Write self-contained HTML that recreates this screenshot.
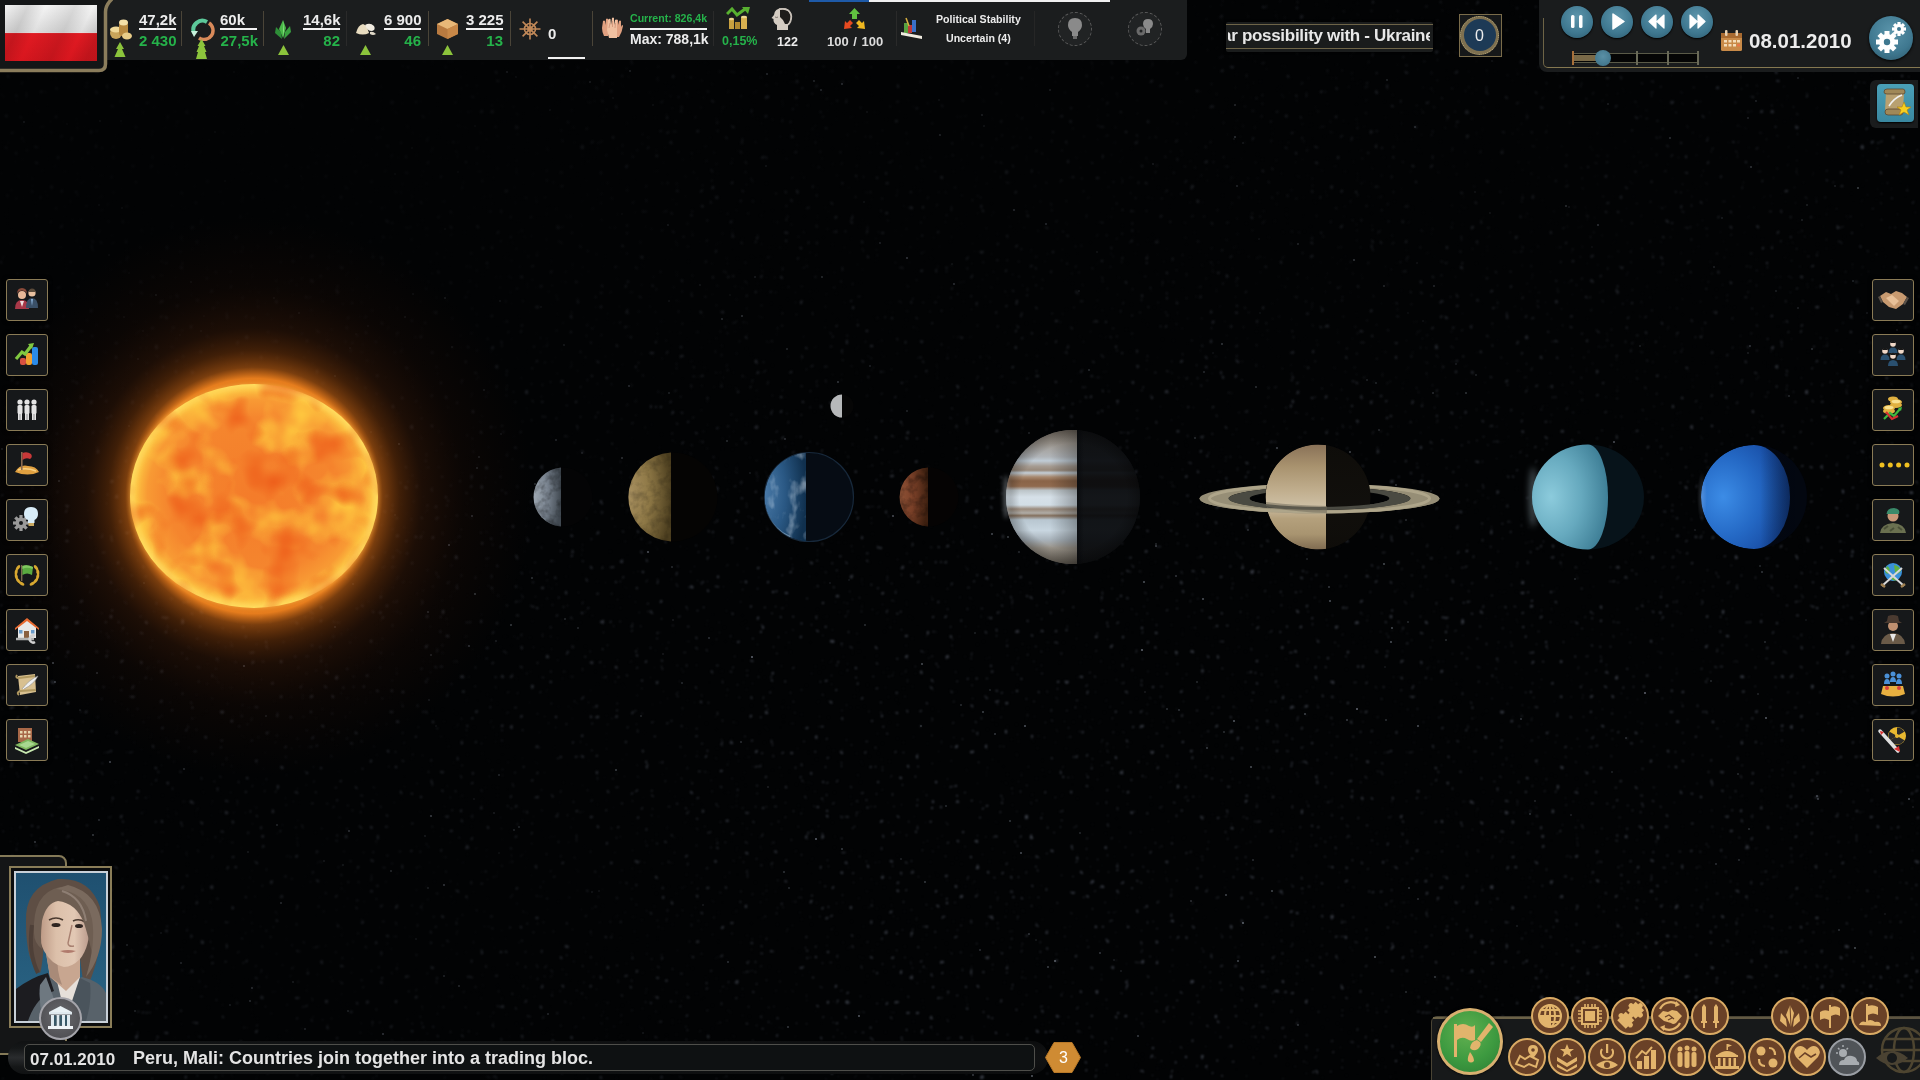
<!DOCTYPE html>
<html><head><meta charset="utf-8">
<style>
*{margin:0;padding:0;box-sizing:border-box}
html,body{width:1920px;height:1080px;overflow:hidden;background:#020304}
body{position:relative;font-family:"Liberation Sans",sans-serif;color:#e6e6e6}
.abs{position:absolute}
.stars{position:absolute;left:0;top:0}
.bar{position:absolute;left:0;top:0;width:1187px;height:60px;background:#1b1d1e;border-bottom-right-radius:6px}
.t{position:absolute;font-weight:bold;white-space:nowrap;line-height:1;will-change:transform}
.w{color:#ececec}
.g{color:#25b24a}
.ul{position:absolute;height:2px;background:#f2f2f2}
.sep{position:absolute;width:1px;background:#4a4438}
.btn{position:absolute;width:42px;height:42px;border:1.5px solid #8a7b56;border-radius:3px;background:#16181a;box-shadow:0 0 4px #000}
.btn svg{position:absolute;left:0;top:0}
.circ{position:absolute;width:38px;height:38px;border-radius:50%;background:#6a4127;border:2.5px solid #d9aa64}
.circ svg{position:absolute;left:0;top:0}
</style></head><body>
<svg class="stars" width="1920" height="1080" viewBox="0 0 1920 1080">
<defs>
<filter id="st" x="0" y="0" width="1920" height="1080" filterUnits="userSpaceOnUse" color-interpolation-filters="sRGB">
 <feTurbulence type="fractalNoise" baseFrequency="0.2" numOctaves="2" seed="4" result="n"/>
 <feColorMatrix in="n" type="matrix" values="0 0 0 0 0.7  0 0 0 0 0.74  0 0 0 0 0.85  15 0 0 0 -10.8" result="s"/>
 <feGaussianBlur in="s" stdDeviation="0.8" result="sb"/>
 <feTurbulence type="fractalNoise" baseFrequency="0.004" numOctaves="2" seed="8" result="m"/>
 <feColorMatrix in="m" type="matrix" values="0 0 0 0 0  0 0 0 0 0  0 0 0 0 0  2.5 0 0 0 -0.7" result="mm"/>
 <feComposite in="sb" in2="mm" operator="arithmetic" k1="0.5" k2="0.3" k3="0" k4="0"/>
</filter>
<radialGradient id="darkTL" cx="250" cy="120" r="650" gradientUnits="userSpaceOnUse"><stop offset="0" stop-color="#020304" stop-opacity=".95"/><stop offset=".5" stop-color="#020304" stop-opacity=".7"/><stop offset="1" stop-color="#020304" stop-opacity="0"/></radialGradient>
<radialGradient id="darkBL" cx="350" cy="950" r="500" gradientUnits="userSpaceOnUse"><stop offset="0" stop-color="#020304" stop-opacity=".6"/><stop offset="1" stop-color="#020304" stop-opacity="0"/></radialGradient>
<radialGradient id="darkTop" cx="1000" cy="100" r="550" gradientUnits="userSpaceOnUse"><stop offset="0" stop-color="#020304" stop-opacity=".75"/><stop offset="1" stop-color="#020304" stop-opacity="0"/></radialGradient>
<radialGradient id="darkTR" cx="1550" cy="160" r="450" gradientUnits="userSpaceOnUse"><stop offset="0" stop-color="#020304" stop-opacity=".65"/><stop offset="1" stop-color="#020304" stop-opacity="0"/></radialGradient>
</defs>
<rect width="1920" height="1080" filter="url(#st)"/>
<g fill="#c0cadc"><circle cx="622" cy="214" r="0.7" opacity="0.22"/><circle cx="1029" cy="433" r="0.7" opacity="0.47"/><circle cx="412" cy="148" r="1.0" opacity="0.22"/><circle cx="174" cy="493" r="1.1" opacity="0.24"/><circle cx="429" cy="700" r="0.7" opacity="0.37"/><circle cx="762" cy="1056" r="0.7" opacity="0.37"/><circle cx="256" cy="488" r="1.1" opacity="0.24"/><circle cx="592" cy="892" r="0.8" opacity="0.23"/><circle cx="1097" cy="252" r="0.7" opacity="0.36"/><circle cx="121" cy="121" r="0.8" opacity="0.35"/><circle cx="1021" cy="853" r="1.0" opacity="0.38"/><circle cx="870" cy="366" r="0.8" opacity="0.41"/><circle cx="469" cy="646" r="1.1" opacity="0.35"/><circle cx="659" cy="518" r="1.1" opacity="0.49"/><circle cx="227" cy="486" r="0.9" opacity="0.25"/><circle cx="939" cy="100" r="0.7" opacity="0.43"/><circle cx="1100" cy="953" r="0.9" opacity="0.30"/><circle cx="672" cy="567" r="1.0" opacity="0.22"/><circle cx="180" cy="335" r="0.7" opacity="0.22"/><circle cx="1347" cy="720" r="1.0" opacity="0.29"/><circle cx="741" cy="742" r="0.7" opacity="0.48"/><circle cx="682" cy="683" r="1.0" opacity="0.22"/><circle cx="1475" cy="192" r="0.8" opacity="0.32"/><circle cx="1760" cy="566" r="0.8" opacity="0.33"/><circle cx="1055" cy="961" r="1.0" opacity="0.46"/><circle cx="535" cy="484" r="0.9" opacity="0.40"/><circle cx="730" cy="295" r="0.7" opacity="0.25"/><circle cx="445" cy="298" r="1.0" opacity="0.45"/><circle cx="350" cy="348" r="0.8" opacity="0.33"/><circle cx="709" cy="638" r="0.8" opacity="0.41"/><circle cx="990" cy="690" r="0.7" opacity="0.34"/><circle cx="1672" cy="1031" r="1.1" opacity="0.32"/><circle cx="766" cy="166" r="1.0" opacity="0.22"/><circle cx="129" cy="273" r="0.8" opacity="0.23"/><circle cx="1153" cy="164" r="1.1" opacity="0.25"/><circle cx="195" cy="431" r="0.7" opacity="0.22"/><circle cx="399" cy="444" r="0.9" opacity="0.49"/><circle cx="1156" cy="544" r="0.7" opacity="0.45"/><circle cx="1907" cy="535" r="1.0" opacity="0.29"/><circle cx="277" cy="825" r="0.9" opacity="0.34"/><circle cx="1329" cy="587" r="0.8" opacity="0.49"/><circle cx="1014" cy="210" r="1.1" opacity="0.47"/><circle cx="1456" cy="364" r="0.7" opacity="0.41"/><circle cx="501" cy="434" r="0.8" opacity="0.31"/><circle cx="428" cy="612" r="1.1" opacity="0.30"/><circle cx="428" cy="888" r="0.8" opacity="0.44"/><circle cx="1571" cy="815" r="0.8" opacity="0.26"/><circle cx="946" cy="806" r="0.7" opacity="0.44"/><circle cx="907" cy="258" r="1.1" opacity="0.49"/><circle cx="859" cy="1016" r="0.9" opacity="0.49"/><circle cx="700" cy="285" r="0.8" opacity="0.34"/><circle cx="648" cy="552" r="1.1" opacity="0.45"/><circle cx="921" cy="726" r="0.7" opacity="0.45"/><circle cx="230" cy="456" r="0.8" opacity="0.34"/><circle cx="343" cy="865" r="0.9" opacity="0.23"/><circle cx="1817" cy="796" r="1.0" opacity="0.32"/><circle cx="1818" cy="799" r="0.8" opacity="0.50"/><circle cx="53" cy="663" r="1.0" opacity="0.44"/><circle cx="281" cy="903" r="1.0" opacity="0.40"/><circle cx="673" cy="620" r="0.8" opacity="0.21"/><circle cx="1535" cy="801" r="0.7" opacity="0.36"/><circle cx="1793" cy="502" r="0.8" opacity="0.45"/><circle cx="405" cy="317" r="0.9" opacity="0.35"/><circle cx="1466" cy="393" r="1.1" opacity="0.33"/><circle cx="252" cy="988" r="0.9" opacity="0.47"/><circle cx="1272" cy="891" r="1.1" opacity="0.33"/><circle cx="1762" cy="572" r="1.1" opacity="0.25"/><circle cx="980" cy="950" r="0.8" opacity="0.38"/><circle cx="1490" cy="213" r="0.8" opacity="0.34"/><circle cx="1392" cy="628" r="0.9" opacity="0.40"/><circle cx="1019" cy="552" r="0.7" opacity="0.46"/><circle cx="109" cy="255" r="0.7" opacity="0.43"/><circle cx="975" cy="633" r="0.7" opacity="0.33"/><circle cx="1176" cy="576" r="1.1" opacity="0.26"/><circle cx="532" cy="578" r="1.0" opacity="0.35"/><circle cx="475" cy="594" r="0.9" opacity="0.48"/><circle cx="1714" cy="267" r="1.0" opacity="0.24"/><circle cx="234" cy="511" r="0.7" opacity="0.40"/><circle cx="822" cy="277" r="0.9" opacity="0.44"/><circle cx="1722" cy="218" r="0.9" opacity="0.24"/><circle cx="1695" cy="1047" r="0.8" opacity="0.42"/><circle cx="181" cy="963" r="0.8" opacity="0.50"/><circle cx="1598" cy="225" r="1.0" opacity="0.50"/><circle cx="775" cy="490" r="0.9" opacity="0.30"/><circle cx="1387" cy="80" r="1.1" opacity="0.34"/><circle cx="1350" cy="452" r="1.1" opacity="0.39"/><circle cx="984" cy="126" r="0.8" opacity="0.49"/><circle cx="201" cy="331" r="0.7" opacity="0.47"/><circle cx="349" cy="831" r="1.0" opacity="0.45"/><circle cx="1298" cy="1025" r="1.0" opacity="0.24"/><circle cx="1765" cy="642" r="0.9" opacity="0.23"/><circle cx="110" cy="762" r="1.0" opacity="0.47"/><circle cx="516" cy="77" r="0.7" opacity="0.44"/><circle cx="161" cy="933" r="0.7" opacity="0.28"/><circle cx="234" cy="72" r="1.1" opacity="0.33"/><circle cx="1758" cy="694" r="0.7" opacity="0.36"/><circle cx="458" cy="172" r="0.8" opacity="0.28"/><circle cx="348" cy="1011" r="0.9" opacity="0.36"/><circle cx="395" cy="515" r="0.8" opacity="0.28"/><circle cx="1543" cy="1074" r="0.7" opacity="0.20"/><circle cx="1408" cy="622" r="0.8" opacity="0.35"/><circle cx="472" cy="516" r="1.0" opacity="0.40"/><circle cx="1048" cy="967" r="1.1" opacity="0.29"/><circle cx="413" cy="294" r="0.8" opacity="0.45"/><circle cx="1357" cy="709" r="1.0" opacity="0.50"/><circle cx="1885" cy="914" r="0.7" opacity="0.22"/><circle cx="1423" cy="321" r="0.8" opacity="0.22"/><circle cx="1277" cy="448" r="1.1" opacity="0.40"/><circle cx="541" cy="307" r="0.9" opacity="0.21"/><circle cx="356" cy="334" r="0.7" opacity="0.28"/><circle cx="1847" cy="1052" r="1.1" opacity="0.30"/><circle cx="66" cy="960" r="0.8" opacity="0.31"/><circle cx="2" cy="449" r="1.0" opacity="0.28"/><circle cx="1260" cy="313" r="0.7" opacity="0.23"/><circle cx="1569" cy="207" r="1.1" opacity="0.21"/><circle cx="43" cy="370" r="0.8" opacity="0.23"/><circle cx="1839" cy="930" r="0.8" opacity="0.40"/><circle cx="1375" cy="957" r="1.0" opacity="0.43"/><circle cx="1384" cy="564" r="0.9" opacity="0.42"/><circle cx="1235" cy="105" r="1.1" opacity="0.39"/><circle cx="1409" cy="888" r="0.8" opacity="0.47"/><circle cx="1446" cy="640" r="0.7" opacity="0.45"/><circle cx="1121" cy="971" r="0.8" opacity="0.23"/><circle cx="80" cy="710" r="0.7" opacity="0.31"/><circle cx="867" cy="112" r="0.7" opacity="0.39"/><circle cx="1307" cy="559" r="0.7" opacity="0.34"/><circle cx="135" cy="1011" r="1.1" opacity="0.23"/><circle cx="1010" cy="821" r="1.0" opacity="0.28"/><circle cx="143" cy="331" r="0.8" opacity="0.27"/><circle cx="1248" cy="530" r="1.0" opacity="0.22"/><circle cx="1748" cy="353" r="0.7" opacity="0.39"/><circle cx="1234" cy="139" r="0.8" opacity="0.30"/><circle cx="1251" cy="767" r="1.1" opacity="0.37"/><circle cx="24" cy="122" r="0.9" opacity="0.49"/><circle cx="191" cy="282" r="1.0" opacity="0.29"/><circle cx="992" cy="534" r="1.0" opacity="0.43"/><circle cx="1907" cy="620" r="0.9" opacity="0.49"/><circle cx="1798" cy="78" r="1.0" opacity="0.22"/><circle cx="973" cy="1075" r="0.9" opacity="0.32"/><circle cx="1760" cy="1009" r="0.7" opacity="0.37"/><circle cx="272" cy="595" r="0.9" opacity="0.24"/><circle cx="1575" cy="579" r="0.7" opacity="0.41"/><circle cx="444" cy="976" r="1.0" opacity="0.32"/><circle cx="305" cy="1029" r="1.0" opacity="0.32"/><circle cx="1396" cy="485" r="1.0" opacity="0.29"/><circle cx="1613" cy="62" r="0.9" opacity="0.45"/><circle cx="230" cy="1005" r="0.7" opacity="0.47"/><circle cx="556" cy="440" r="1.0" opacity="0.32"/><circle cx="1670" cy="138" r="1.0" opacity="0.43"/><circle cx="1640" cy="346" r="0.7" opacity="0.45"/><circle cx="548" cy="1014" r="0.8" opacity="0.49"/><circle cx="838" cy="382" r="0.9" opacity="0.44"/><circle cx="821" cy="90" r="1.0" opacity="0.47"/><circle cx="1806" cy="620" r="0.7" opacity="0.21"/><circle cx="1406" cy="520" r="0.8" opacity="0.39"/><circle cx="550" cy="110" r="1.1" opacity="0.24"/><circle cx="907" cy="411" r="0.9" opacity="0.28"/><circle cx="1418" cy="726" r="1.0" opacity="0.40"/><circle cx="578" cy="628" r="1.0" opacity="0.24"/><circle cx="1235" cy="137" r="1.1" opacity="0.47"/><circle cx="954" cy="284" r="0.9" opacity="0.50"/><circle cx="864" cy="202" r="0.8" opacity="0.27"/><circle cx="335" cy="627" r="0.9" opacity="0.27"/><circle cx="496" cy="641" r="0.7" opacity="0.42"/><circle cx="793" cy="482" r="1.1" opacity="0.26"/><circle cx="519" cy="827" r="1.0" opacity="0.28"/><circle cx="1858" cy="188" r="1.1" opacity="0.36"/><circle cx="1517" cy="926" r="0.7" opacity="0.28"/><circle cx="477" cy="468" r="1.0" opacity="0.33"/><circle cx="599" cy="891" r="0.7" opacity="0.24"/><circle cx="816" cy="839" r="1.0" opacity="0.49"/><circle cx="940" cy="135" r="1.1" opacity="0.46"/><circle cx="1867" cy="313" r="0.7" opacity="0.27"/><circle cx="292" cy="1051" r="0.7" opacity="0.48"/><circle cx="1386" cy="720" r="1.0" opacity="0.23"/><circle cx="1492" cy="61" r="0.8" opacity="0.27"/><circle cx="1766" cy="718" r="0.9" opacity="0.49"/><circle cx="1203" cy="599" r="1.0" opacity="0.41"/><circle cx="215" cy="132" r="1.1" opacity="0.48"/><circle cx="368" cy="326" r="1.1" opacity="0.20"/><circle cx="1032" cy="1076" r="0.9" opacity="0.49"/><circle cx="1238" cy="961" r="1.0" opacity="0.36"/><circle cx="1050" cy="90" r="1.0" opacity="0.41"/><circle cx="590" cy="82" r="1.0" opacity="0.47"/><circle cx="1243" cy="143" r="0.8" opacity="0.40"/><circle cx="1776" cy="291" r="0.7" opacity="0.41"/><circle cx="1379" cy="430" r="1.0" opacity="0.26"/><circle cx="1530" cy="814" r="1.1" opacity="0.22"/><circle cx="952" cy="264" r="0.8" opacity="0.27"/><circle cx="425" cy="836" r="0.9" opacity="0.23"/><circle cx="1197" cy="682" r="0.8" opacity="0.35"/><circle cx="1748" cy="118" r="1.1" opacity="0.24"/><circle cx="755" cy="277" r="1.1" opacity="0.24"/><circle cx="100" cy="121" r="1.0" opacity="0.33"/><circle cx="1367" cy="380" r="0.7" opacity="0.50"/><circle cx="1789" cy="396" r="0.8" opacity="0.40"/><circle cx="1008" cy="537" r="0.9" opacity="0.40"/><circle cx="727" cy="441" r="0.9" opacity="0.33"/><circle cx="209" cy="140" r="0.7" opacity="0.31"/><circle cx="1835" cy="186" r="0.8" opacity="0.31"/><circle cx="1476" cy="375" r="1.0" opacity="0.23"/><circle cx="1354" cy="260" r="1.1" opacity="0.48"/><circle cx="371" cy="432" r="1.0" opacity="0.21"/><circle cx="789" cy="888" r="1.0" opacity="0.21"/><circle cx="67" cy="124" r="0.7" opacity="0.28"/><circle cx="1435" cy="977" r="0.9" opacity="0.31"/><circle cx="643" cy="1033" r="0.7" opacity="0.28"/><circle cx="1376" cy="383" r="0.9" opacity="0.29"/><circle cx="1385" cy="667" r="0.7" opacity="0.21"/><circle cx="449" cy="545" r="1.0" opacity="0.49"/><circle cx="742" cy="316" r="1.0" opacity="0.44"/><circle cx="255" cy="566" r="0.7" opacity="0.44"/><circle cx="1418" cy="899" r="0.8" opacity="0.38"/><circle cx="629" cy="386" r="0.9" opacity="0.44"/><circle cx="1144" cy="582" r="1.0" opacity="0.43"/><circle cx="475" cy="126" r="0.7" opacity="0.34"/><circle cx="1046" cy="224" r="1.0" opacity="0.47"/><circle cx="1897" cy="330" r="0.7" opacity="0.26"/><circle cx="808" cy="1068" r="1.0" opacity="0.25"/><circle cx="255" cy="530" r="0.8" opacity="0.42"/><circle cx="1626" cy="738" r="0.7" opacity="0.43"/><circle cx="564" cy="345" r="0.9" opacity="0.31"/><circle cx="1417" cy="263" r="0.8" opacity="0.26"/><circle cx="452" cy="347" r="1.1" opacity="0.26"/><circle cx="124" cy="317" r="0.8" opacity="0.35"/><circle cx="444" cy="885" r="1.0" opacity="0.50"/><circle cx="196" cy="544" r="0.8" opacity="0.45"/><circle cx="1756" cy="101" r="0.9" opacity="0.27"/><circle cx="97" cy="673" r="1.1" opacity="0.26"/><circle cx="144" cy="583" r="0.8" opacity="0.33"/><circle cx="499" cy="853" r="0.7" opacity="0.23"/><circle cx="1145" cy="692" r="0.8" opacity="0.21"/><circle cx="653" cy="105" r="0.9" opacity="0.21"/><circle cx="1406" cy="992" r="0.7" opacity="0.45"/><circle cx="785" cy="439" r="1.1" opacity="0.29"/><circle cx="391" cy="871" r="1.1" opacity="0.35"/><circle cx="784" cy="872" r="1.1" opacity="0.25"/><circle cx="1025" cy="726" r="1.0" opacity="0.41"/><circle cx="787" cy="349" r="0.9" opacity="0.33"/><circle cx="99" cy="820" r="0.9" opacity="0.32"/><circle cx="35" cy="842" r="0.9" opacity="0.39"/><circle cx="750" cy="473" r="0.7" opacity="0.33"/><circle cx="301" cy="176" r="0.7" opacity="0.32"/><circle cx="1695" cy="530" r="0.8" opacity="0.24"/><circle cx="99" cy="205" r="1.0" opacity="0.23"/><circle cx="1195" cy="438" r="1.1" opacity="0.25"/><circle cx="668" cy="225" r="0.8" opacity="0.48"/><circle cx="209" cy="560" r="0.8" opacity="0.29"/><circle cx="1608" cy="104" r="1.0" opacity="0.29"/><circle cx="1167" cy="709" r="0.7" opacity="0.47"/><circle cx="1191" cy="901" r="0.8" opacity="0.39"/><circle cx="1645" cy="693" r="1.1" opacity="0.45"/><circle cx="1592" cy="247" r="0.8" opacity="0.21"/><circle cx="1802" cy="220" r="0.9" opacity="0.24"/><circle cx="474" cy="799" r="0.8" opacity="0.21"/><circle cx="1080" cy="833" r="0.7" opacity="0.40"/><circle cx="622" cy="458" r="1.0" opacity="0.37"/><circle cx="1204" cy="372" r="1.0" opacity="0.29"/><circle cx="479" cy="457" r="0.9" opacity="0.33"/><circle cx="842" cy="84" r="1.1" opacity="0.50"/><circle cx="893" cy="516" r="1.1" opacity="0.43"/><circle cx="880" cy="243" r="1.0" opacity="0.32"/><circle cx="129" cy="426" r="0.9" opacity="0.23"/><circle cx="849" cy="580" r="0.7" opacity="0.21"/><circle cx="250" cy="1001" r="0.9" opacity="0.43"/><circle cx="982" cy="115" r="1.1" opacity="0.47"/><circle cx="1253" cy="860" r="0.7" opacity="0.46"/><circle cx="1913" cy="807" r="0.7" opacity="0.26"/><circle cx="1885" cy="562" r="0.8" opacity="0.41"/><circle cx="1384" cy="286" r="0.9" opacity="0.38"/><circle cx="484" cy="390" r="1.1" opacity="0.28"/><circle cx="1566" cy="206" r="1.1" opacity="0.49"/><circle cx="922" cy="664" r="1.1" opacity="0.35"/><circle cx="613" cy="98" r="0.8" opacity="0.32"/><circle cx="1222" cy="344" r="0.9" opacity="0.47"/><circle cx="324" cy="861" r="0.7" opacity="0.43"/><circle cx="93" cy="935" r="1.0" opacity="0.37"/><circle cx="1114" cy="960" r="0.7" opacity="0.28"/><circle cx="1029" cy="934" r="0.9" opacity="0.28"/><circle cx="1902" cy="649" r="0.9" opacity="0.30"/><circle cx="156" cy="295" r="1.1" opacity="0.42"/><circle cx="93" cy="896" r="0.9" opacity="0.29"/><circle cx="1855" cy="948" r="0.9" opacity="0.42"/><circle cx="1434" cy="286" r="0.9" opacity="0.38"/><circle cx="830" cy="583" r="0.7" opacity="0.24"/><circle cx="436" cy="726" r="0.7" opacity="0.22"/><circle cx="1089" cy="370" r="1.1" opacity="0.31"/><circle cx="431" cy="655" r="1.1" opacity="0.24"/><circle cx="703" cy="905" r="0.8" opacity="0.24"/><circle cx="1798" cy="308" r="0.8" opacity="0.34"/><circle cx="122" cy="208" r="0.9" opacity="0.32"/><circle cx="507" cy="72" r="1.1" opacity="0.47"/><circle cx="1142" cy="650" r="1.1" opacity="0.48"/><circle cx="1408" cy="313" r="0.7" opacity="0.21"/><circle cx="1021" cy="474" r="0.8" opacity="0.25"/><circle cx="1751" cy="167" r="1.1" opacity="0.37"/><circle cx="1807" cy="205" r="0.8" opacity="0.36"/><circle cx="1234" cy="721" r="1.0" opacity="0.44"/><circle cx="335" cy="376" r="0.9" opacity="0.39"/><circle cx="1909" cy="799" r="1.0" opacity="0.41"/><circle cx="12" cy="921" r="1.0" opacity="0.22"/><circle cx="1259" cy="239" r="0.7" opacity="0.28"/><circle cx="1237" cy="186" r="0.9" opacity="0.41"/><circle cx="511" cy="625" r="1.0" opacity="0.41"/><circle cx="1761" cy="1051" r="0.9" opacity="0.39"/><circle cx="1853" cy="281" r="1.1" opacity="0.20"/><circle cx="500" cy="301" r="0.8" opacity="0.48"/><circle cx="1433" cy="393" r="1.0" opacity="0.30"/><circle cx="459" cy="986" r="1.1" opacity="0.34"/><circle cx="1612" cy="772" r="0.7" opacity="0.33"/><circle cx="1391" cy="642" r="0.9" opacity="0.44"/><circle cx="752" cy="657" r="1.1" opacity="0.47"/><circle cx="278" cy="87" r="0.7" opacity="0.39"/><circle cx="311" cy="1057" r="0.7" opacity="0.21"/><circle cx="266" cy="716" r="0.7" opacity="0.41"/><circle cx="1415" cy="127" r="1.1" opacity="0.43"/><circle cx="383" cy="1034" r="1.1" opacity="0.47"/><circle cx="127" cy="945" r="1.0" opacity="0.23"/><circle cx="395" cy="174" r="0.7" opacity="0.48"/><circle cx="1749" cy="829" r="0.7" opacity="0.45"/><circle cx="1213" cy="353" r="0.7" opacity="0.24"/><circle cx="1521" cy="719" r="0.9" opacity="0.30"/><circle cx="814" cy="81" r="0.9" opacity="0.48"/><circle cx="93" cy="835" r="0.9" opacity="0.43"/><circle cx="1156" cy="546" r="0.9" opacity="0.39"/><circle cx="59" cy="481" r="1.0" opacity="0.36"/><circle cx="189" cy="538" r="0.7" opacity="0.36"/><circle cx="416" cy="939" r="0.7" opacity="0.37"/><circle cx="551" cy="505" r="1.1" opacity="0.26"/><circle cx="1463" cy="1057" r="0.7" opacity="0.30"/><circle cx="184" cy="769" r="0.8" opacity="0.49"/><circle cx="1138" cy="1036" r="1.1" opacity="0.28"/><circle cx="1812" cy="349" r="0.8" opacity="0.48"/><circle cx="445" cy="229" r="0.7" opacity="0.35"/><circle cx="1903" cy="632" r="0.7" opacity="0.39"/><circle cx="683" cy="469" r="1.0" opacity="0.47"/><circle cx="1431" cy="491" r="0.7" opacity="0.31"/><circle cx="582" cy="497" r="1.1" opacity="0.35"/><circle cx="728" cy="962" r="0.8" opacity="0.48"/><circle cx="244" cy="666" r="1.1" opacity="0.39"/><circle cx="669" cy="393" r="0.8" opacity="0.46"/><circle cx="865" cy="625" r="0.9" opacity="0.25"/><circle cx="842" cy="849" r="1.1" opacity="0.27"/><circle cx="641" cy="716" r="0.8" opacity="0.35"/><circle cx="514" cy="830" r="1.1" opacity="0.25"/><circle cx="299" cy="313" r="0.9" opacity="0.38"/><circle cx="669" cy="301" r="0.8" opacity="0.28"/><circle cx="1834" cy="1075" r="0.8" opacity="0.49"/><circle cx="195" cy="452" r="0.8" opacity="0.44"/><circle cx="1408" cy="504" r="0.8" opacity="0.23"/><circle cx="1750" cy="346" r="1.0" opacity="0.34"/><circle cx="24" cy="931" r="1.0" opacity="0.41"/><circle cx="961" cy="705" r="1.0" opacity="0.21"/><circle cx="494" cy="813" r="0.7" opacity="0.42"/><circle cx="1743" cy="499" r="1.1" opacity="0.38"/><circle cx="1243" cy="923" r="1.1" opacity="0.46"/><circle cx="1305" cy="714" r="1.0" opacity="0.33"/><circle cx="499" cy="775" r="1.0" opacity="0.27"/><circle cx="768" cy="787" r="0.8" opacity="0.28"/><circle cx="813" cy="524" r="1.1" opacity="0.46"/><circle cx="995" cy="734" r="0.8" opacity="0.47"/><circle cx="630" cy="71" r="1.0" opacity="0.47"/><circle cx="204" cy="316" r="0.8" opacity="0.25"/><circle cx="1501" cy="1019" r="1.1" opacity="0.30"/><circle cx="1627" cy="526" r="0.8" opacity="0.42"/><circle cx="983" cy="712" r="0.9" opacity="0.36"/><circle cx="788" cy="1027" r="0.8" opacity="0.50"/><circle cx="353" cy="584" r="0.7" opacity="0.42"/><circle cx="1179" cy="710" r="0.9" opacity="0.28"/><circle cx="767" cy="74" r="1.0" opacity="0.47"/><circle cx="1207" cy="748" r="1.1" opacity="0.28"/><circle cx="431" cy="816" r="1.1" opacity="0.49"/><circle cx="1909" cy="1040" r="1.0" opacity="0.26"/><circle cx="248" cy="852" r="0.8" opacity="0.34"/><circle cx="1079" cy="291" r="0.8" opacity="0.31"/><circle cx="1226" cy="895" r="1.0" opacity="0.34"/><circle cx="565" cy="619" r="0.8" opacity="0.43"/><circle cx="901" cy="859" r="0.8" opacity="0.28"/><circle cx="722" cy="319" r="1.0" opacity="0.40"/><circle cx="925" cy="882" r="0.9" opacity="0.31"/><circle cx="1256" cy="387" r="1.0" opacity="0.33"/><circle cx="1224" cy="732" r="0.9" opacity="0.25"/><circle cx="582" cy="453" r="0.7" opacity="0.45"/><circle cx="1739" cy="860" r="0.8" opacity="0.36"/><circle cx="663" cy="654" r="0.7" opacity="0.26"/><circle cx="138" cy="359" r="1.1" opacity="0.23"/><circle cx="274" cy="298" r="1.0" opacity="0.30"/><circle cx="293" cy="982" r="1.1" opacity="0.25"/><circle cx="1711" cy="681" r="0.7" opacity="0.40"/><circle cx="1716" cy="864" r="0.9" opacity="0.26"/><circle cx="1330" cy="601" r="1.0" opacity="0.40"/><circle cx="225" cy="181" r="1.0" opacity="0.27"/><circle cx="268" cy="563" r="0.7" opacity="0.35"/><circle cx="1738" cy="774" r="0.8" opacity="0.35"/><circle cx="1036" cy="940" r="0.7" opacity="0.25"/><circle cx="616" cy="770" r="1.0" opacity="0.40"/><circle cx="1614" cy="442" r="1.0" opacity="0.50"/><circle cx="1298" cy="244" r="0.9" opacity="0.39"/><circle cx="55" cy="682" r="0.9" opacity="0.44"/><circle cx="180" cy="554" r="0.8" opacity="0.21"/></g>
<rect width="1920" height="1080" fill="url(#darkTL)"/>
<rect width="1920" height="1080" fill="url(#darkBL)"/>
<rect width="1920" height="1080" fill="url(#darkTop)"/>
<rect width="1920" height="1080" fill="url(#darkTR)"/>
</svg>

<!-- SUN -->
<svg class="abs" style="left:0;top:0" width="1920" height="1080">
<defs>
 <radialGradient id="glow" cx="254" cy="496" r="280" gradientUnits="userSpaceOnUse">
  <stop offset="0" stop-color="#ff8a20" stop-opacity="1"/>
  <stop offset=".42" stop-color="#ff8a20" stop-opacity=".9"/>
  <stop offset=".46" stop-color="#f07818" stop-opacity=".5"/>
  <stop offset=".52" stop-color="#d06010" stop-opacity=".3"/>
  <stop offset=".6" stop-color="#a84810" stop-opacity=".16"/>
  <stop offset=".75" stop-color="#803008" stop-opacity=".07"/>
  <stop offset="1" stop-color="#602000" stop-opacity="0"/>
 </radialGradient>
 <radialGradient id="sunBase" cx="50%" cy="50%" r="50%">
  <stop offset="0" stop-color="#f47c2a"/><stop offset=".7" stop-color="#f5862e"/><stop offset=".86" stop-color="#f89a34"/><stop offset=".95" stop-color="#fcc040"/><stop offset="1" stop-color="#ffe060"/>
 </radialGradient>
 <filter id="sunTex" x="0" y="0" width="100%" height="100%" color-interpolation-filters="sRGB">
  <feTurbulence type="fractalNoise" baseFrequency="0.022" numOctaves="3" seed="11" result="n"/>
  <feColorMatrix in="n" type="matrix" values="0 0 0 0 1  0 0 0 0 0.8  0 0 0 0 0.25  2.4 0 0 0 -1.15" result="spots"/>
  <feComposite in="spots" in2="SourceGraphic" operator="atop" result="c1"/>
  <feTurbulence type="fractalNoise" baseFrequency="0.03" numOctaves="2" seed="5" result="n2"/>
  <feColorMatrix in="n2" type="matrix" values="0 0 0 0 0.93  0 0 0 0 0.36  0 0 0 0 0.1  2.4 0 0 0 -1.15" result="spots2"/>
  <feComposite in="spots2" in2="c1" operator="atop"/>
 </filter>
 <radialGradient id="earth" cx="0%" cy="45%" r="100%"><stop offset="0" stop-color="#4a7aa8"/><stop offset=".5" stop-color="#2a5884"/><stop offset="1" stop-color="#10304e"/></radialGradient>
 <radialGradient id="merc" cx="0%" cy="45%" r="100%"><stop offset="0" stop-color="#a0aab4"/><stop offset=".5" stop-color="#7c8692"/><stop offset="1" stop-color="#404850"/></radialGradient>
 <radialGradient id="venus" cx="0%" cy="45%" r="100%"><stop offset="0" stop-color="#a89060"/><stop offset=".5" stop-color="#8e7846"/><stop offset="1" stop-color="#4e4020"/></radialGradient>
 <radialGradient id="mars" cx="0%" cy="45%" r="100%"><stop offset="0" stop-color="#8e5236"/><stop offset=".5" stop-color="#7a4028"/><stop offset="1" stop-color="#3e2010"/></radialGradient>
 <linearGradient id="jup" x1="0" y1="430" x2="0" y2="564" gradientUnits="userSpaceOnUse">
  <stop offset="0" stop-color="#8e8478"/><stop offset=".1" stop-color="#a09a92"/><stop offset=".2" stop-color="#b0b4b8"/>
  <stop offset=".23" stop-color="#c0ccd6"/><stop offset=".27" stop-color="#a69c92"/><stop offset=".3" stop-color="#988a7c"/><stop offset=".32" stop-color="#c4ced6"/>
  <stop offset=".35" stop-color="#a88a70"/><stop offset=".38" stop-color="#8a6448"/><stop offset=".42" stop-color="#906a4e"/><stop offset=".45" stop-color="#bcc4c8"/>
  <stop offset=".5" stop-color="#d6e0e8"/><stop offset=".56" stop-color="#d2dee6"/><stop offset=".59" stop-color="#9a8a7c"/><stop offset=".62" stop-color="#b0aca6"/><stop offset=".64" stop-color="#84705e"/>
  <stop offset=".67" stop-color="#b8c6d0"/><stop offset=".75" stop-color="#c8d6e0"/><stop offset=".82" stop-color="#a8b2ba"/><stop offset=".88" stop-color="#9c968c"/><stop offset="1" stop-color="#7e766a"/>
 </linearGradient>
 <linearGradient id="jupShade2" x1="0" y1="0" x2="1" y2="0"><stop offset="0" stop-color="#000" stop-opacity="0"/><stop offset="1" stop-color="#000" stop-opacity=".3"/></linearGradient>
 <linearGradient id="jupShade" x1="0" y1="0" x2="1" y2="0"><stop offset="0" stop-color="#000" stop-opacity="0"/><stop offset=".85" stop-color="#000" stop-opacity=".05"/><stop offset="1" stop-color="#000" stop-opacity=".35"/></linearGradient>
 <linearGradient id="sat" x1="0" y1="445" x2="0" y2="550" gradientUnits="userSpaceOnUse">
  <stop offset="0" stop-color="#8a7258"/><stop offset=".2" stop-color="#a8926e"/><stop offset=".45" stop-color="#c2b090"/><stop offset=".58" stop-color="#cdbfa4"/><stop offset=".7" stop-color="#b4a07c"/><stop offset=".85" stop-color="#a89470"/><stop offset="1" stop-color="#7e6a50"/>
 </linearGradient>
 <radialGradient id="ura" cx="25%" cy="50%" r="80%"><stop offset="0" stop-color="#8ccbdc"/><stop offset=".5" stop-color="#66a9be"/><stop offset="1" stop-color="#3a7a92"/></radialGradient>
 <radialGradient id="nep" cx="25%" cy="50%" r="80%"><stop offset="0" stop-color="#3c8ce6"/><stop offset=".5" stop-color="#2468c4"/><stop offset="1" stop-color="#14449a"/></radialGradient>
 <linearGradient id="nepShade" x1="0" y1="0" x2="1" y2="0"><stop offset="0" stop-color="#020610" stop-opacity="0"/><stop offset="1" stop-color="#020610" stop-opacity=".9"/></linearGradient>
 <clipPath id="cEar"><circle cx="809" cy="497" r="44.5"/></clipPath>
 <clipPath id="cJup"><circle cx="1073" cy="497" r="67"/></clipPath>
 <clipPath id="cSat"><circle cx="1318" cy="497" r="52.5"/></clipPath>
 <clipPath id="cFront"><rect x="1150" y="498" width="350" height="30"/></clipPath>
 <clipPath id="cNep"><ellipse cx="1754" cy="497" rx="53" ry="52"/></clipPath>
 <radialGradient id="limbGlow" cx="50%" cy="50%" r="50%"><stop offset="0" stop-color="#d8e8ff" stop-opacity=".5"/><stop offset="1" stop-color="#d8e8ff" stop-opacity="0"/></radialGradient>
 <radialGradient id="uraGlow" cx="50%" cy="50%" r="50%"><stop offset="0" stop-color="#a0e0f0" stop-opacity=".45"/><stop offset="1" stop-color="#a0e0f0" stop-opacity="0"/></radialGradient>
<filter id="clouds" x="0" y="0" width="100%" height="100%" color-interpolation-filters="sRGB">
  <feTurbulence type="fractalNoise" baseFrequency="0.09 0.05" numOctaves="3" seed="2" result="n"/>
  <feColorMatrix in="n" type="matrix" values="0 0 0 0 .9  0 0 0 0 .94  0 0 0 0 .98  3 0 0 0 -1.55" result="sp"/>
  <feComposite in="sp" in2="SourceGraphic" operator="in"/>
 </filter>
 <filter id="grain" x="0" y="0" width="100%" height="100%" color-interpolation-filters="sRGB">
  <feTurbulence type="fractalNoise" baseFrequency="0.12" numOctaves="3" seed="9" result="n"/>
  <feColorMatrix in="n" type="matrix" values="0 0 0 0 0  0 0 0 0 0  0 0 0 0 0  1.8 0 0 0 -0.75" result="sp"/>
  <feComposite in="sp" in2="SourceGraphic" operator="in"/>
 </filter>
<radialGradient id="limbDark" cx="50%" cy="50%" r="50%"><stop offset=".8" stop-color="#000" stop-opacity="0"/><stop offset="1" stop-color="#000" stop-opacity=".3"/></radialGradient>
<linearGradient id="jupTerm" x1="0" y1="0" x2="1" y2="0"><stop offset="0" stop-color="#07090c" stop-opacity="0"/><stop offset=".5" stop-color="#07090c" stop-opacity=".7"/><stop offset="1" stop-color="#07090c" stop-opacity="0"/></linearGradient>
</defs>

<!-- sun glow + body -->
<ellipse cx="254" cy="496" rx="290" ry="280" fill="url(#glow)"/>
<ellipse cx="254" cy="496" rx="124" ry="112" fill="url(#sunBase)" filter="url(#sunTex)"/>
<ellipse cx="254" cy="496" rx="121" ry="109" fill="none" stroke="#ffd860" stroke-width="5" opacity=".55" style="filter:blur(2.5px)"/>

<!-- Mercury -->
<circle cx="563" cy="497" r="29.5" fill="#040405"/>
<path d="M561 467.57 A29.5 29.5 0 0 0 561 526.43 Z" fill="url(#merc)"/>
<path d="M561 467.57 A29.5 29.5 0 0 0 561 526.43 Z" fill="#000" filter="url(#grain)" opacity=".45"/>
<!-- Venus -->
<circle cx="673" cy="497" r="44.5" fill="#050403"/>
<path d="M671 452.54 A44.5 44.5 0 0 0 671 541.46 Z" fill="url(#venus)"/>
<path d="M671 452.54 A44.5 44.5 0 0 0 671 541.46 Z" fill="#000" filter="url(#grain)" opacity=".28"/>
<!-- Moon -->
<circle cx="842" cy="406" r="11.5" fill="#060606"/>
<path d="M842 394.50 A11.5 11.5 0 0 0 842 417.50 Z" fill="#b6b8ba"/>
<!-- Earth -->
<circle cx="809" cy="497" r="44.5" fill="#060c14" stroke="#17283a" stroke-width="1.2"/>
<g clip-path="url(#cEar)">
 <path d="M806 452.60 A44.5 44.5 0 0 0 806 541.40 Z" fill="url(#earth)"/>
 <path d="M806 452.60 A44.5 44.5 0 0 0 806 541.40 Z" fill="#dfe8f0" filter="url(#clouds)" opacity=".45"/>
 <path d="M766 480 A44.5 44.5 0 0 0 790 537" stroke="#a8c8e0" stroke-width="2" fill="none" opacity=".5"/>
</g>
<!-- Mars -->
<circle cx="929" cy="497" r="29.5" fill="#050303"/>
<path d="M928 467.52 A29.5 29.5 0 0 0 928 526.48 Z" fill="url(#mars)"/>
<path d="M928 467.52 A29.5 29.5 0 0 0 928 526.48 Z" fill="#000" filter="url(#grain)" opacity=".45"/>
<!-- Jupiter -->
<circle cx="1073" cy="497" r="67" fill="#07090c"/>
<g clip-path="url(#cJup)">
 <rect x="1077" y="428" width="70" height="140" fill="url(#jup)" opacity=".06"/>
 <rect x="1070" y="428" width="14" height="140" fill="url(#jupTerm)"/>
 <rect x="1004" y="428" width="73" height="140" fill="url(#jup)"/>
 <rect x="1050" y="428" width="27" height="140" fill="url(#jupShade2)"/>
 <circle cx="1073" cy="497" r="67" fill="url(#limbDark)"/>
</g>
<ellipse cx="1006" cy="497" rx="2.5" ry="22" fill="#e8f4ff" opacity=".35" style="filter:blur(2px)"/>
<!-- Saturn rings back -->
<path d="M1199.5 498.5 A120 15 0 1 0 1439.5 498.5 A120 15 0 1 0 1199.5 498.5 Z M1228.5 498.5 A91 11.4 0 1 0 1410.5 498.5 A91 11.4 0 1 0 1228.5 498.5 Z" fill="#968e76" fill-rule="evenodd"/>
<path d="M1228.5 498.5 A91 11.4 0 1 0 1410.5 498.5 A91 11.4 0 1 0 1228.5 498.5 Z M1249.5 498.5 A70 8.5 0 1 0 1389.5 498.5 A70 8.5 0 1 0 1249.5 498.5 Z" fill="#4a4a42" fill-rule="evenodd"/>
<ellipse cx="1319.5" cy="498.5" rx="110" ry="13.5" fill="none" stroke="#beb498" stroke-width="3" opacity=".6"/>
<!-- Saturn body -->
<circle cx="1318" cy="497" r="52.5" fill="#090806"/>
<g clip-path="url(#cSat)">
 <path d="M1326 445.11 A52.5 52.5 0 1 0 1326 548.89 Z" fill="url(#sat)"/>
 <rect x="1326" y="444" width="50" height="106" fill="url(#sat)" opacity=".04"/>
</g>
<!-- Saturn rings front -->
<g clip-path="url(#cFront)">
<path d="M1199.5 498.5 A120 15 0 1 0 1439.5 498.5 A120 15 0 1 0 1199.5 498.5 Z M1228.5 498.5 A91 11.4 0 1 0 1410.5 498.5 A91 11.4 0 1 0 1228.5 498.5 Z" fill="#968e76" fill-rule="evenodd"/>
<path d="M1228.5 498.5 A91 11.4 0 1 0 1410.5 498.5 A91 11.4 0 1 0 1228.5 498.5 Z M1249.5 498.5 A70 8.5 0 1 0 1389.5 498.5 A70 8.5 0 1 0 1249.5 498.5 Z" fill="#4a4a42" fill-rule="evenodd"/>
<ellipse cx="1319.5" cy="498.5" rx="110" ry="13.5" fill="none" stroke="#beb498" stroke-width="3" opacity=".6"/>
</g>
<path d="M1266 506 Q1290 512 1327 513 L1327 506 Q1290 505 1266 502 Z" fill="#6e6858" opacity=".5"/>
<!-- Uranus -->
<ellipse cx="1588" cy="497" rx="56" ry="52.5" fill="#07131a"/>
<ellipse cx="1533" cy="497" rx="4" ry="30" fill="#d8f4ff" opacity=".3" style="filter:blur(3px)"/>
<path d="M1588 444.5 A56 52.5 0 0 0 1588 549.5 A20 52.5 0 0 0 1588 444.5 Z" fill="url(#ura)"/>
<!-- Neptune -->
<ellipse cx="1754" cy="497" rx="53" ry="52" fill="#030710"/>
<g clip-path="url(#cNep)">
 <path d="M1754 445 A53 52 0 0 0 1754 549 A36 52 0 0 0 1754 445 Z" fill="url(#nep)"/>
 <rect x="1760" y="445" width="35" height="104" fill="url(#nepShade)" opacity=".6"/>
</g>
<ellipse cx="1702" cy="497" rx="5" ry="26" fill="url(#limbGlow)" opacity=".4"/>
</svg>

<!-- TOP BAR -->
<div class="bar"></div>
<!--TOPBAR-->
<!-- flag frame -->
<svg class="abs" style="left:0;top:0" width="120" height="80" viewBox="0 0 120 80"><path d="M0 0 L112 0 Q105.5 5 105.5 12 L105.5 64 Q105.5 70.5 99 70.5 L0 70.5 Z" fill="#141617"/><path d="M112 -1 Q105.5 5 105.5 12 L105.5 64 Q105.5 70.5 99 70.5 L-5 70.5" fill="none" stroke="#8b7d5c" stroke-width="3.5"/></svg>
<div class="abs" style="left:5px;top:5px;width:92px;height:56px;background:linear-gradient(180deg,#f4f4f4 0%,#dedede 48%,#e8e8e8 49%,#e01a22 51%,#d8161e 100%)"></div>
<div class="abs" style="left:5px;top:5px;width:92px;height:56px;background:linear-gradient(115deg,rgba(0,0,0,0) 0%,rgba(0,0,0,.12) 20%,rgba(0,0,0,0) 35%,rgba(0,0,0,.1) 60%,rgba(0,0,0,0) 75%,rgba(0,0,0,.12) 90%)"></div>

<!-- resource groups -->
<!-- coins -->
<svg class="abs" style="left:109px;top:17px" width="24" height="24" viewBox="0 0 24 24">
 <ellipse cx="7" cy="16" rx="6" ry="6" fill="#c9a45a"/><ellipse cx="7" cy="12.5" rx="6" ry="3" fill="#f0d898"/>
 <rect x="10" y="5" width="9" height="14" rx="3" fill="#b88a40"/><ellipse cx="14.5" cy="5.5" rx="4.5" ry="3" fill="#f4e0a8"/>
 <ellipse cx="18" cy="19" rx="5" ry="3.5" fill="#e8cc88"/>
</svg>
<svg class="abs" style="left:114px;top:41px" width="12" height="17" viewBox="0 0 12 17"><path d="M6 1 L10 8 L8 8 L11.5 16 L0.5 16 L4 8 L2 8 Z" fill="#8cc43c"/></svg>
<div class="t w" style="left:139px;top:12px;font-size:15px">47,2k</div>
<div class="ul" style="left:139px;top:28px;width:37px"></div>
<div class="t g" style="left:139px;top:33px;font-size:15px;width:37px;text-align:right">2 430</div>
<div class="sep" style="left:181px;top:11px;height:35px"></div>

<!-- recycle -->
<svg class="abs" style="left:190px;top:17px" width="25" height="24" viewBox="0 0 25 24">
 <path d="M4 16 A9 9 0 0 1 17 5" stroke="#5cc89a" stroke-width="4" fill="none"/>
 <path d="M1 14 L8 14 L4 20 Z" fill="#c8f0dc"/>
 <path d="M19 6 A9 9 0 0 1 9 21" stroke="#d98a5a" stroke-width="3.5" fill="none"/>
</svg>
<svg class="abs" style="left:196px;top:39px" width="11" height="20" viewBox="0 0 11 20"><path d="M5.5 0 L9.5 7 L8 7 L10.5 13 L9 13 L11 20 L0 20 L2 13 L0.5 13 L3 7 L1.5 7 Z" fill="#8cc43c"/></svg>
<div class="t w" style="left:220px;top:12px;font-size:15px">60k</div>
<div class="ul" style="left:220px;top:28px;width:37px"></div>
<div class="t g" style="left:210px;top:33px;font-size:15px;width:48px;text-align:right">27,5k</div>
<div class="sep" style="left:263px;top:11px;height:35px"></div>

<!-- crystal -->
<svg class="abs" style="left:273px;top:18px" width="20" height="22" viewBox="0 0 20 22">
 <path d="M10 2 L13 10 L10 20 L6 11 Z" fill="#49b848"/><path d="M3 9 L8 14 L9 21 L2 15 Z" fill="#2e8e38"/><path d="M17 8 L12 14 L11 21 L18 14 Z" fill="#3aa040"/><path d="M10 2 L11 12 L10 20 Z" fill="#a8f0a0" opacity=".7"/>
</svg>
<svg class="abs" style="left:278px;top:45px" width="11" height="10" viewBox="0 0 11 10"><path d="M5.5 0 L11 10 L0 10 Z" fill="#8cc43c"/></svg>
<div class="t w" style="left:303px;top:12px;font-size:15px">14,6k</div>
<div class="ul" style="left:303px;top:28px;width:37px"></div>
<div class="t g" style="left:293px;top:33px;font-size:15px;width:47px;text-align:right">82</div>
<div class="sep" style="left:346px;top:11px;height:35px;background:#2a2a2a"></div>

<!-- rocks -->
<svg class="abs" style="left:355px;top:21px" width="22" height="16" viewBox="0 0 22 16">
 <path d="M1 12 Q3 4 8 3 Q12 4 14 12 Q8 15 1 12 Z" fill="#e8dcc0"/><path d="M10 4 Q15 1 19 5 Q21 9 17 10 Q12 10 10 4 Z" fill="#f0ebe0"/><path d="M15 11 Q18 10 21 13 Q18 15 15 13 Z" fill="#e0d8c8"/>
</svg>
<svg class="abs" style="left:360px;top:45px" width="11" height="10" viewBox="0 0 11 10"><path d="M5.5 0 L11 10 L0 10 Z" fill="#8cc43c"/></svg>
<div class="t w" style="left:384px;top:12px;font-size:15px">6 900</div>
<div class="ul" style="left:384px;top:28px;width:37px"></div>
<div class="t g" style="left:374px;top:33px;font-size:15px;width:47px;text-align:right">46</div>
<div class="sep" style="left:428px;top:11px;height:35px"></div>

<!-- box -->
<svg class="abs" style="left:436px;top:18px" width="23" height="22" viewBox="0 0 23 22">
 <path d="M11.5 1 L22 6 L22 16 L11.5 21 L1 16 L1 6 Z" fill="#b87a40"/><path d="M11.5 1 L22 6 L11.5 11 L1 6 Z" fill="#e8b878"/><path d="M11.5 11 L22 6 L22 16 L11.5 21 Z" fill="#c88848"/>
</svg>
<svg class="abs" style="left:442px;top:45px" width="11" height="10" viewBox="0 0 11 10"><path d="M5.5 0 L11 10 L0 10 Z" fill="#8cc43c"/></svg>
<div class="t w" style="left:466px;top:12px;font-size:15px">3 225</div>
<div class="ul" style="left:466px;top:28px;width:37px"></div>
<div class="t g" style="left:456px;top:33px;font-size:15px;width:47px;text-align:right">13</div>
<div class="sep" style="left:510px;top:11px;height:35px"></div>

<!-- wheel -->
<svg class="abs" style="left:519px;top:18px" width="22" height="22" viewBox="0 0 22 22">
 <g stroke="#c08858" stroke-width="1.6" fill="none"><circle cx="11" cy="11" r="5.5"/><circle cx="11" cy="11" r="2"/>
 <path d="M11 0.5 V21.5 M0.5 11 H21.5 M3.6 3.6 L18.4 18.4 M18.4 3.6 L3.6 18.4"/></g>
</svg>
<div class="t w" style="left:548px;top:26px;font-size:15px">0</div>
<div class="abs" style="left:548px;top:57px;width:37px;height:2px;background:#f2f2f2"></div>
<div class="sep" style="left:592px;top:11px;height:35px"></div>

<!-- hands -->
<svg class="abs" style="left:600px;top:16px" width="24" height="24" viewBox="0 0 24 24">
 <g fill="#e0a080"><path d="M2 12 L3 5 Q4 4 5 5 L5.5 9 L6 3 Q7 2 8 3 L8 9 L9 13 L8 20 L4 20 Q2 16 2 12 Z"/>
 <path d="M15 12 L16 4 Q17 3 18 4 L18 9 L19 5 Q20 4 21 5 L21 11 L22 9 Q23 9 23 10 L21.5 16 L19 21 L15 21 Z"/></g>
 <path d="M7 14 L8 4 Q9 2 10.5 3 L11 9 L12 2 Q13 1 14 2 L14 9 L15 4 Q16 3 17 4 L17 13 L17 22 L9 22 Z" fill="#f0c0a0"/>
 <path d="M9 12 L10 7 M12.5 11 L12.5 5 M15 12 L15.5 7" stroke="#c88a70" stroke-width=".7"/>
</svg>
<div class="t g" style="left:630px;top:13px;font-size:10.6px">Current: 826,4k</div>
<div class="ul" style="left:630px;top:28px;width:77px"></div>
<div class="t w" style="left:630px;top:32px;font-size:14px">Max: 788,1k</div>
<div class="sep" style="left:713px;top:11px;height:35px;background:#2a2a2a"></div>

<!-- growth -->
<svg class="abs" style="left:726px;top:7px" width="25" height="24" viewBox="0 0 25 24">
 <rect x="3" y="12" width="5" height="10" fill="#c8a040"/><rect x="9" y="15" width="5" height="7" fill="#b08830"/><rect x="15" y="10" width="6" height="12" fill="#d8b050"/>
 <ellipse cx="5.5" cy="12" rx="2.5" ry="1.2" fill="#f0d890"/><ellipse cx="18" cy="10" rx="3" ry="1.2" fill="#f0d890"/>
 <path d="M1 7 L6 2 L11 8 L19 2" stroke="#58b030" stroke-width="3" fill="none"/><path d="M16 0 L24 0 L22 7 Z" fill="#58b030"/>
</svg>
<div class="t g" style="left:722px;top:34.5px;font-size:12.5px">0,15%</div>

<!-- head -->
<svg class="abs" style="left:770px;top:7px" width="23" height="24" viewBox="0 0 23 24">
 <path d="M7 23 L7 18 Q3 16 3.5 12 L1.5 11 L4 8 Q4.5 1.5 12 1 Q21 1 21.5 9 Q21.5 15 18 18 L18 23 Z" fill="#d4ccc2"/>
 <path d="M10 3 Q19 1.5 20.5 9 Q20.5 14 17.5 17 L15 17 Q13 12 10 10 Z" fill="#1e1c1a"/>
 <path d="M9 2 Q20 0 21.5 9 Q21.5 15 18 18" stroke="#c8c0b8" stroke-width="1.4" fill="none"/>
 <path d="M5 10 Q7 11 8 10" stroke="#6a625a" stroke-width=".8" fill="none"/>
</svg>
<div class="t w" style="left:777px;top:35.5px;font-size:12.5px">122</div>

<!-- arrows triangle -->
<svg class="abs" style="left:843px;top:8px" width="23" height="22" viewBox="0 0 23 22">
 <path d="M11.5 0 L17 6 L14 6 L14 11 L9 11 L9 6 L6 6 Z" fill="#60c040"/>
 <path d="M1 21 L2 13 L4 15 L7 12 L10 15 L7 18 L9 20 Z" fill="#e84a20"/>
 <path d="M22 21 L21 13 L19 15 L16 12 L13 15 L16 18 L14 20 Z" fill="#f0b820"/>
</svg>
<div class="t w" style="left:827px;top:34.5px;font-size:13px;color:#dcdcdc;word-spacing:1px">100 / 100</div>
<div class="sep" style="left:896px;top:11px;height:35px;background:#2a2a2a"></div>

<!-- political -->
<svg class="abs" style="left:900px;top:16px" width="24" height="24" viewBox="0 0 24 24">
 <rect x="12" y="4" width="4" height="12" fill="#3a70c8"/><rect x="8" y="9" width="4" height="8" fill="#c03838"/><rect x="4" y="7" width="4" height="10" fill="#58a040"/>
 <path d="M1 16 L22 20 L22 23 L1 19 Z" fill="#f0ece0"/><path d="M6 2 L9 10" stroke="#d8b040" stroke-width="1.5"/>
</svg>
<div class="t w" style="left:936px;top:13.5px;font-size:10.6px">Political Stability</div>
<div class="t w" style="left:946px;top:32.5px;font-size:10.6px">Uncertain (4)</div>
<div class="sep" style="left:1034px;top:11px;height:35px;background:#262626"></div>

<!-- bulbs -->
<div class="abs" style="left:1058px;top:12px;width:34px;height:34px;border-radius:50%;border:1px dashed #5a5a5a;background:#212324"></div>
<svg class="abs" style="left:1065px;top:17px" width="20" height="24" viewBox="0 0 20 24"><path d="M10 1 Q17 1 17 8 Q17 12 13 15 L13 19 L7 19 L7 15 Q3 12 3 8 Q3 1 10 1 Z" fill="#8a8a8a"/><rect x="8" y="19" width="4" height="3" fill="#6a6a6a"/></svg>
<div class="abs" style="left:1128px;top:12px;width:34px;height:34px;border-radius:50%;border:1px dashed #5a5a5a;background:#212324"></div>
<svg class="abs" style="left:1133px;top:17px" width="24" height="24" viewBox="0 0 24 24"><path d="M15 2 Q20 2 20 7 Q20 10 17 12 L17 16 L13 16 L13 12 Q10 10 10 7 Q10 2 15 2 Z" fill="#8a8a8a"/><circle cx="8" cy="14" r="4.5" fill="#6a6a6a"/><circle cx="8" cy="14" r="1.5" fill="#212324"/></svg>

<!-- top blue/white line -->
<div class="abs" style="left:809px;top:0;width:60px;height:2px;background:#1e5aa8"></div>
<div class="abs" style="left:869px;top:0;width:241px;height:2px;background:#f0f0f0"></div>

<!-- ticker -->
<div class="abs" style="left:1226px;top:22px;width:207px;height:30px;background:#1a1c1c;border-radius:2px;overflow:hidden;box-shadow:0 0 3px #000">
 <div class="abs" style="left:0;top:2px;width:207px;height:1px;background:#6e6448"></div>
 <div class="abs" style="left:0;top:26px;width:207px;height:1px;background:#6e6448"></div>
 <div class="abs" style="left:2px;top:0;width:202px;height:30px;overflow:hidden">
  <div class="t" style="left:-6.5px;top:5px;font-size:17px;letter-spacing:-0.3px;color:#e8e8e8">ar possibility with - Ukraine</div>
 </div>
</div>
<!-- badge 0 -->
<div class="abs" style="left:1459px;top:14px;width:43px;height:43px;border:1px solid #7a6c4a;background:#161819"></div>
<div class="abs" style="left:1460px;top:15.5px;width:39px;height:39px;border-radius:50%;background:#7e7050;border:1.5px dotted #b8a878"></div>
<div class="abs" style="left:1463.5px;top:19px;width:32px;height:32px;border-radius:50%;background:#1d3a56"></div>
<div class="t w" style="left:1475px;top:28px;font-size:16px;font-weight:normal">0</div>


<!-- right panel bg -->
<div class="abs" style="left:1539px;top:-20px;width:400px;height:92px;background:#1a1c1d;border-radius:14px 0 0 8px"></div>
<div class="abs" style="left:1543px;top:18px;width:400px;height:50px;border-left:1.5px solid #6e6446;border-bottom:1.5px solid #857850;border-bottom-left-radius:5px"></div>
<!-- media buttons -->
<div class="abs" style="left:1561px;top:6px;width:32px;height:32px;border-radius:50%;background:radial-gradient(circle at 50% 35%,#5d95ab 0%,#3f7890 60%,#2c5a6e 100%);box-shadow:0 1px 2px #000"></div>
<div class="abs" style="left:1601px;top:6px;width:32px;height:32px;border-radius:50%;background:radial-gradient(circle at 50% 35%,#5d95ab 0%,#3f7890 60%,#2c5a6e 100%);box-shadow:0 1px 2px #000"></div>
<div class="abs" style="left:1641px;top:6px;width:32px;height:32px;border-radius:50%;background:radial-gradient(circle at 50% 35%,#5d95ab 0%,#3f7890 60%,#2c5a6e 100%);box-shadow:0 1px 2px #000"></div>
<div class="abs" style="left:1681px;top:6px;width:32px;height:32px;border-radius:50%;background:radial-gradient(circle at 50% 35%,#5d95ab 0%,#3f7890 60%,#2c5a6e 100%);box-shadow:0 1px 2px #000"></div>
<svg class="abs" style="left:1561px;top:6px" width="160" height="32" viewBox="0 0 160 32">
 <rect x="10" y="9" width="3.5" height="13" rx="1.5" fill="#fff"/><rect x="18" y="9" width="3.5" height="13" rx="1.5" fill="#fff"/>
 <path d="M52 8 L63 15.5 L52 23 Z" fill="#fff" stroke="#fff" stroke-width="1.5" stroke-linejoin="round"/>
 <path d="M95 9 L88 15.5 L95 22 Z M103 9 L96 15.5 L103 22 Z" fill="#fff" stroke="#fff" stroke-width="1.2" stroke-linejoin="round"/>
 <path d="M129 9 L136 15.5 L129 22 Z M137 9 L144 15.5 L137 22 Z" fill="#fff" stroke="#fff" stroke-width="1.2" stroke-linejoin="round"/>
</svg>
<!-- slider -->
<div class="abs" style="left:1572px;top:53px;width:127px;height:10px;background:#050505;border:1px solid #5a5a48"></div>
<div class="abs" style="left:1573px;top:55px;width:30px;height:6px;background:#7a6a48"></div>
<div class="abs" style="left:1572px;top:51px;width:2px;height:14px;background:#a8703a"></div>
<div class="abs" style="left:1636px;top:51px;width:2px;height:14px;background:#6a6a58"></div>
<div class="abs" style="left:1667px;top:51px;width:2px;height:14px;background:#6a6a58"></div>
<div class="abs" style="left:1697px;top:51px;width:2px;height:14px;background:#6a6a58"></div>
<div class="abs" style="left:1595px;top:50px;width:16px;height:16px;border-radius:50%;background:radial-gradient(circle at 50% 40%,#5a90a6,#3a6e84)"></div>
<!-- calendar -->
<svg class="abs" style="left:1720px;top:29px" width="23" height="23" viewBox="0 0 23 23">
 <rect x="1" y="4" width="21" height="18" rx="1.5" fill="#c88a48"/><rect x="1" y="4" width="21" height="5" fill="#a86a30"/>
 <rect x="5" y="1" width="2.5" height="6" rx="1" fill="#e8d0b0"/><rect x="15.5" y="1" width="2.5" height="6" rx="1" fill="#e8d0b0"/>
 <g fill="#f4dcb8"><rect x="4" y="11" width="3" height="2.5"/><rect x="8.5" y="11" width="3" height="2.5"/><rect x="13" y="11" width="3" height="2.5"/><rect x="17" y="11" width="3" height="2.5"/>
 <rect x="4" y="15" width="3" height="2.5"/><rect x="8.5" y="15" width="3" height="2.5"/><rect x="13" y="15" width="3" height="2.5"/><rect x="17" y="15" width="3" height="2.5" fill="#e87848"/></g>
</svg>
<div class="t w" style="left:1749px;top:30.5px;font-size:20.5px;color:#ececec">08.01.2010</div>
<!-- gear button -->
<div class="abs" style="left:1869px;top:16px;width:44px;height:44px;border-radius:50%;background:radial-gradient(circle at 50% 35%,#5a94aa 0%,#3f7890 60%,#2a5668 100%);box-shadow:0 1px 3px #000"></div>
<svg class="abs" style="left:1869px;top:16px" width="44" height="44" viewBox="0 0 44 44">
 <g fill="#fff"><circle cx="18" cy="26" r="8"/><g transform="translate(18 26)">
 <rect x="-2.5" y="-11" width="5" height="22"/><rect x="-2.5" y="-11" width="5" height="22" transform="rotate(45)"/><rect x="-2.5" y="-11" width="5" height="22" transform="rotate(90)"/><rect x="-2.5" y="-11" width="5" height="22" transform="rotate(135)"/></g>
 <circle cx="30" cy="13" r="5"/><g transform="translate(30 13)"><rect x="-1.6" y="-7" width="3.2" height="14"/><rect x="-1.6" y="-7" width="3.2" height="14" transform="rotate(45)"/><rect x="-1.6" y="-7" width="3.2" height="14" transform="rotate(90)"/><rect x="-1.6" y="-7" width="3.2" height="14" transform="rotate(135)"/></g></g>
 <circle cx="18" cy="26" r="3.2" fill="#3f7890"/><circle cx="30" cy="13" r="2" fill="#3f7890"/>
</svg>
<!-- quest scroll button -->
<div class="abs" style="left:1870px;top:80px;width:48px;height:48px;background:#1a1c1d;border-radius:6px 0 0 6px"></div>
<div class="abs" style="left:1877px;top:84px;width:37px;height:38px;border-radius:4px;background:linear-gradient(180deg,#4aa0b8,#3a88a0);box-shadow:0 1px 2px #000"></div>
<svg class="abs" style="left:1877px;top:84px" width="37" height="38" viewBox="0 0 37 38">
 <path d="M9 8 L25 7 Q27 7 27 9 L26 28 L11 30 Q8 30 8 27 Z" fill="#b8a070"/>
 <path d="M7 8 Q7 5 10 5 L26 5 Q28 5 28 8 Q28 10 26 10 L10 10 Q7 10 7 8 Z" fill="#a08858" stroke="#5a4830" stroke-width=".8"/>
 <path d="M8 28 Q8 25 11 25 L24 25 Q26 25 26 28 Q26 31 24 31 L11 31 Q8 31 8 28 Z" fill="#a08858" stroke="#5a4830" stroke-width=".8"/>
 <path d="M12 22 Q17 14 25 11" stroke="#f0f0f0" stroke-width="1.6" fill="none"/>
 <path d="M27 18 L29 23 L34 23 L30 26 L32 31 L27 28 L22 31 L24 26 L20 23 L25 23 Z" fill="#f8d020" stroke="#b08010" stroke-width=".6"/>
</svg>

<div class="btn" style="left:6px;top:279px"><svg width="42" height="42" viewBox="0 0 42 42" style="left:-1.5px;top:-1.5px"><circle cx="16" cy="16" r="4" fill="#e8b898"/><path d="M11 15 Q11 9 16 9 Q21 9 21 15 L20 13 Q16 10 12 13 Z" fill="#8a4a3a"/><path d="M9 30 Q9 21 16 21 Q23 21 23 30 Z" fill="#a83848"/><path d="M14 22 L16 28 L18 22 Z" fill="#f0e0e0"/>
<circle cx="26" cy="14" r="3.6" fill="#e8c0a0"/><path d="M22.5 13 Q23 9.5 26 9.5 Q29.5 9.5 29.5 13 Z" fill="#5a4a3a"/><path d="M20 29 Q20 19 26 19 Q32 19 32 29 Z" fill="#3a5068"/><path d="M25 20 L26 27 L27 20 Z" fill="#8ab0d8"/></svg></div>
<div class="btn" style="left:6px;top:334px"><svg width="42" height="42" viewBox="0 0 42 42" style="left:-1.5px;top:-1.5px"><rect x="14" y="24" width="6" height="7" rx="2" fill="#d85040"/><rect x="20" y="19" width="6" height="12" rx="2" fill="#f0a030"/><rect x="26" y="13" width="6" height="18" rx="2" fill="#2a8ae8"/><path d="M10 25 L16 18 L19 20 L25 12" stroke="#80c840" stroke-width="3.2" fill="none"/><path d="M22 10 L28 9 L26 15 Z" fill="#80c840"/></svg></div>
<div class="btn" style="left:6px;top:389px"><svg width="42" height="42" viewBox="0 0 42 42" style="left:-1.5px;top:-1.5px"><g fill="#e4e4e4"><circle cx="14" cy="13" r="2.6"/><rect x="11.5" y="16" width="5" height="9" rx="1.5"/><rect x="12" y="24" width="1.8" height="7"/><rect x="14.2" y="24" width="1.8" height="7"/>
<circle cx="21" cy="13" r="2.6"/><rect x="18.5" y="16" width="5" height="9" rx="1.5"/><rect x="19" y="24" width="1.8" height="7"/><rect x="21.2" y="24" width="1.8" height="7"/>
<circle cx="28" cy="13" r="2.6"/><rect x="25.5" y="16" width="5" height="9" rx="1.5"/><rect x="26" y="24" width="1.8" height="7"/><rect x="28.2" y="24" width="1.8" height="7"/></g></svg></div>
<div class="btn" style="left:6px;top:444px"><svg width="42" height="42" viewBox="0 0 42 42" style="left:-1.5px;top:-1.5px"><path d="M9 28 Q14 20 22 22 Q30 22 33 28 Q22 33 9 28 Z" fill="#e0a040"/><path d="M12 26 Q20 23 30 27" stroke="#f8d080" stroke-width="1.5" fill="none"/><rect x="15" y="8" width="1.6" height="18" fill="#8a6a50"/><path d="M16.5 9 Q21 7 25 10 Q27 13 24 15 Q20 13 16.5 16 Z" fill="#c83838"/></svg></div>
<div class="btn" style="left:6px;top:499px"><svg width="42" height="42" viewBox="0 0 42 42" style="left:-1.5px;top:-1.5px"><g transform="translate(15 24)" fill="#9a9a9a"><circle r="5.5"/><rect x="-1.6" y="-8" width="3.2" height="16"/><rect x="-1.6" y="-8" width="3.2" height="16" transform="rotate(45)"/><rect x="-1.6" y="-8" width="3.2" height="16" transform="rotate(90)"/><rect x="-1.6" y="-8" width="3.2" height="16" transform="rotate(135)"/><circle r="2" fill="#16181a"/></g>
<path d="M25 8 Q32 8 32 15 Q32 19 28.5 21 L28.5 24 L22 24 L22 21 Q18 19 18 15 Q18 8 25 8 Z" fill="#d8ecf8"/><rect x="22.5" y="24" width="5.5" height="3" fill="#c8a860"/></svg></div>
<div class="btn" style="left:6px;top:554px"><svg width="42" height="42" viewBox="0 0 42 42" style="left:-1.5px;top:-1.5px"><ellipse cx="12.0" cy="13.7" rx="1.5" ry="3" transform="rotate(-145 12.0 13.7)" fill="#d8a830"/><ellipse cx="30.0" cy="13.7" rx="1.5" ry="3" transform="rotate(145 30.0 13.7)" fill="#d8a830"/><ellipse cx="10.2" cy="17.9" rx="1.5" ry="3" transform="rotate(-169 10.2 17.9)" fill="#d8a830"/><ellipse cx="31.8" cy="17.9" rx="1.5" ry="3" transform="rotate(169 31.8 17.9)" fill="#d8a830"/><ellipse cx="10.3" cy="22.5" rx="1.5" ry="3" transform="rotate(-193 10.3 22.5)" fill="#d8a830"/><ellipse cx="31.7" cy="22.5" rx="1.5" ry="3" transform="rotate(193 31.7 22.5)" fill="#d8a830"/><ellipse cx="12.2" cy="26.6" rx="1.5" ry="3" transform="rotate(-217 12.2 26.6)" fill="#d8a830"/><ellipse cx="29.8" cy="26.6" rx="1.5" ry="3" transform="rotate(217 29.8 26.6)" fill="#d8a830"/><ellipse cx="15.7" cy="29.6" rx="1.5" ry="3" transform="rotate(-241 15.7 29.6)" fill="#d8a830"/><ellipse cx="26.3" cy="29.6" rx="1.5" ry="3" transform="rotate(241 26.3 29.6)" fill="#d8a830"/><rect x="15" y="11" width="1.4" height="16" fill="#7a6a50"/><path d="M16.4 12 Q21 10 27 13 L26 21 Q21 18 16.4 21 Z" fill="#5aaa40"/><path d="M16.4 12 Q21 10 27 13 L26.5 15 Q21 12.5 16.4 15 Z" fill="#80c860"/></svg></div>
<div class="btn" style="left:6px;top:609px"><svg width="42" height="42" viewBox="0 0 42 42" style="left:-1.5px;top:-1.5px"><path d="M10 19 L21 10 L32 19 L30 19 L30 29 L12 29 L12 19 Z" fill="#e8e8e8"/><path d="M9 19 L21 9 L33 19 L33 21 L21 12 L9 21 Z" fill="#e86a30"/><rect x="18" y="22" width="5" height="7" fill="#8a6040"/><rect x="13" y="21" width="3.5" height="3.5" fill="#6a9ac8"/><rect x="25" y="21" width="3.5" height="3.5" fill="#6a9ac8"/>
<path d="M10 30 L28 30" stroke="#b0b0b0" stroke-width="2.5"/><path d="M29 27 A3.5 3.5 0 1 0 29 33" stroke="#d0d0d0" stroke-width="2.5" fill="none"/></svg></div>
<div class="btn" style="left:6px;top:664px"><svg width="42" height="42" viewBox="0 0 42 42" style="left:-1.5px;top:-1.5px"><path d="M12 12 L29 10 L30 28 L14 31 Z" fill="#d8c090"/><path d="M11 11 Q9 14 13 14 L29 12" stroke="#b09860" stroke-width="2" fill="none"/><path d="M13 31 Q10 29 14 27 L30 26" stroke="#b09860" stroke-width="2" fill="none"/>
<path d="M16 25 Q24 15 32 12 Q28 20 18 25" fill="#f0f0f0" stroke="#909090" stroke-width=".6"/></svg></div>
<div class="btn" style="left:6px;top:719px"><svg width="42" height="42" viewBox="0 0 42 42" style="left:-1.5px;top:-1.5px"><rect x="12" y="9" width="14" height="14" fill="#a86848"/><g fill="#e8d8b0"><rect x="14" y="12" width="2.5" height="2.5"/><rect x="18" y="12" width="2.5" height="2.5"/><rect x="22" y="12" width="2.5" height="2.5"/><rect x="14" y="16" width="2.5" height="2.5"/><rect x="18" y="16" width="2.5" height="2.5"/><rect x="22" y="16" width="2.5" height="2.5"/></g>
<path d="M9 26 L22 20 L33 25 L20 31 Z" fill="#80b860"/><path d="M9 28 L20 33 L33 27 L33 29 L20 35 L9 30 Z" fill="#c8e8b0"/><path d="M13 26 L22 22 L29 25 L20 29 Z" fill="#a8d890"/></svg></div>
<div class="btn" style="left:1872px;top:279px"><svg width="42" height="42" viewBox="0 0 42 42" style="left:-1.5px;top:-1.5px"><path d="M8 17 L14 13 L19 15 L24 12 L30 14 L35 18 L31 25 L24 30 L17 28 L11 23 Z" fill="#c89a70"/><path d="M14 19 L20 16 L27 22 L22 27 Z" fill="#e8c098"/><path d="M8 17 L11 23 L9 24 L6 18 Z" fill="#5a5048"/><path d="M35 18 L31 25 L33 26 L37 19 Z" fill="#5a5048"/></svg></div>
<div class="btn" style="left:1872px;top:334px"><svg width="42" height="42" viewBox="0 0 42 42" style="left:-1.5px;top:-1.5px"><g><circle cx="21" cy="10" r="2.8" fill="#f0d8c8"/><path d="M16.5 19 Q16.5 13.5 21 13.5 Q25.5 13.5 25.5 19 Z" fill="#2a5070"/>
<circle cx="13" cy="17" r="2.8" fill="#f0d8c8"/><path d="M8.5 26 Q8.5 20.5 13 20.5 Q17.5 20.5 17.5 26 Z" fill="#2a5070"/>
<circle cx="29" cy="17" r="2.8" fill="#f0d8c8"/><path d="M24.5 26 Q24.5 20.5 29 20.5 Q33.5 20.5 33.5 26 Z" fill="#2a5070"/>
<circle cx="21" cy="22" r="2.8" fill="#f0d8c8"/><path d="M16 32 Q16 26 21 26 Q26 26 26 32 Z" fill="#2a5070"/></g>
<g fill="#181818"><path d="M18.2 9 Q18.5 6.8 21 6.8 Q23.5 6.8 23.8 9 Z"/><path d="M10.2 16 Q10.5 13.8 13 13.8 Q15.5 13.8 15.8 16 Z"/><path d="M26.2 16 Q26.5 13.8 29 13.8 Q31.5 13.8 31.8 16 Z"/><path d="M18.2 21 Q18.5 18.8 21 18.8 Q23.5 18.8 23.8 21 Z"/></g></svg></div>
<div class="btn" style="left:1872px;top:389px"><svg width="42" height="42" viewBox="0 0 42 42" style="left:-1.5px;top:-1.5px"><g fill="#e0b040"><ellipse cx="17" cy="22" rx="6" ry="3"/><ellipse cx="17" cy="19" rx="6" ry="3"/><ellipse cx="24" cy="16" rx="6" ry="3"/><ellipse cx="24" cy="13" rx="6" ry="3"/><ellipse cx="21" cy="10" rx="5" ry="2.5"/></g><g fill="#f8e090"><ellipse cx="17" cy="18.5" rx="4.5" ry="1.8"/><ellipse cx="24" cy="12.5" rx="4.5" ry="1.8"/></g>
<path d="M12 30 L18 24 L22 27 L28 20" stroke="#40b840" stroke-width="2.2" fill="none"/><path d="M26 19 L30 18 L29 22 Z" fill="#40b840"/><path d="M14 23 L20 30 L26 27" stroke="#d83030" stroke-width="2.2" fill="none"/></svg></div>
<div class="btn" style="left:1872px;top:444px"><svg width="42" height="42" viewBox="0 0 42 42" style="left:-1.5px;top:-1.5px"><g fill="#f0c020"><circle cx="10" cy="21" r="2.5"/><circle cx="18.3" cy="21" r="2.5"/><circle cx="26.6" cy="21" r="2.5"/><circle cx="35" cy="21" r="2.5"/></g></svg></div>
<div class="btn" style="left:1872px;top:499px"><svg width="42" height="42" viewBox="0 0 42 42" style="left:-1.5px;top:-1.5px"><path d="M8 34 Q9 25 21 24 Q33 25 34 34 Z" fill="#6a7050"/><path d="M12 30 L16 27 M26 28 L30 31 M18 32 L22 29" stroke="#4a5038" stroke-width="2"/><circle cx="21" cy="17" r="5.5" fill="#c89878"/><path d="M14.5 15 Q15 9 22 9 Q29 10 27 15 Z" fill="#3a8a6a"/></svg></div>
<div class="btn" style="left:1872px;top:554px"><svg width="42" height="42" viewBox="0 0 42 42" style="left:-1.5px;top:-1.5px"><circle cx="21" cy="18" r="9" fill="#3a90d8"/><path d="M15 12 Q19 14 17 19 Q14 21 13 17 Z M22 11 Q28 12 29 17 Q25 22 23 18 Z M19 23 Q23 22 25 26 Q20 28 19 23 Z" fill="#60b040"/>
<path d="M10 32 L30 14 M32 32 L12 14" stroke="#d8d8d8" stroke-width="2"/><path d="M9 30 L13 33 M33 30 L29 33" stroke="#a08050" stroke-width="2.5"/></svg></div>
<div class="btn" style="left:1872px;top:609px"><svg width="42" height="42" viewBox="0 0 42 42" style="left:-1.5px;top:-1.5px"><path d="M9 35 Q10 25 21 24 Q32 25 33 35 Z" fill="#6a5a48"/><path d="M18 25 L21 33 L24 25 Z" fill="#e8e8e8"/><circle cx="21" cy="17" r="5" fill="#c09070"/><path d="M12 14 L30 14 L27 12 L26 7 Q21 5 16 7 L15 12 Z" fill="#4a3a30"/></svg></div>
<div class="btn" style="left:1872px;top:664px"><svg width="42" height="42" viewBox="0 0 42 42" style="left:-1.5px;top:-1.5px"><g fill="#4a90d8"><circle cx="15" cy="12" r="2.5"/><circle cx="21" cy="10" r="2.5"/><circle cx="27" cy="12" r="2.5"/><path d="M12 20 Q12 15 15 15 Q18 15 18 20 Z"/><path d="M18 18 Q18 13 21 13 Q24 13 24 18 Z"/><path d="M24 20 Q24 15 27 15 Q30 15 30 20 Z"/></g>
<path d="M11 22 L31 22 L33 30 Q21 35 9 30 Z" fill="#e8b040"/><circle cx="15" cy="24" r="2" fill="#d84040"/><circle cx="27" cy="24" r="2" fill="#d84040"/></svg></div>
<div class="btn" style="left:1872px;top:719px"><svg width="42" height="42" viewBox="0 0 42 42" style="left:-1.5px;top:-1.5px"><circle cx="25" cy="17" r="9" fill="#e8b830"/><g fill="#2a2a2a"><path d="M25 17 L25 8.5 A8.5 8.5 0 0 1 32.4 12.8 Z"/><path d="M25 17 L32.4 21.2 A8.5 8.5 0 0 1 17.6 21.2 Z" transform="rotate(0)"/><path d="M25 17 L17.6 12.8 A8.5 8.5 0 0 1 25 8.5 Z" transform="rotate(-60 25 17)"/></g><circle cx="25" cy="17" r="2" fill="#e8b830"/>
<path d="M8 12 L26 32" stroke="#e0e0e0" stroke-width="3.5" stroke-linecap="round"/><path d="M8 12 L12 13 L9 16 Z" fill="#d83030"/><path d="M22 30 L27 27 L28 33 Z" fill="#d83030"/></svg></div>
<!-- bottom-left panel -->
<div class="abs" style="left:-20px;top:855px;width:87px;height:200px;background:#141516;border:2.5px solid #857a58;border-radius:0 8px 0 0"></div>
<div class="abs" style="left:9px;top:866px;width:103px;height:162px;background:#0c0d0e;border:2.5px solid #8a7d58"></div>
<div class="abs" style="left:14px;top:871px;width:94px;height:152px;border:2px solid #c8d0d8;background:#285a74;overflow:hidden">
<svg width="90" height="148" viewBox="0 0 90 148" style="position:absolute;left:0;top:0">
 <defs><linearGradient id="pbg" x1="0" y1="0" x2="0" y2="1"><stop offset="0" stop-color="#1f5070"/><stop offset="1" stop-color="#2a6484"/></linearGradient>
 <linearGradient id="skin" x1="0" y1="0" x2="1" y2="0"><stop offset="0" stop-color="#b89480"/><stop offset=".35" stop-color="#dcc0aa"/><stop offset=".7" stop-color="#e2c8b4"/><stop offset="1" stop-color="#b8988a"/></linearGradient></defs>
 <rect width="90" height="148" fill="url(#pbg)"/>
 <!-- hair back -->
 <path d="M10 50 Q8 14 42 6 Q74 4 84 34 Q88 60 80 90 Q74 112 68 116 L62 70 L28 70 Q26 96 24 100 Q10 90 10 50 Z" fill="#5e4e44"/>
 <!-- jacket -->
 <path d="M0 148 L0 116 Q14 106 30 102 L50 112 L66 104 Q84 108 90 120 L90 148 Z" fill="#58626a"/>
 <path d="M0 116 Q16 104 32 100 L38 118 Q20 124 12 148 L0 148 Z" fill="#1c1c20"/>
 <path d="M30 104 L46 148 L28 148 Q22 130 24 112 Z" fill="#6e7880"/>
 <path d="M62 104 L52 148 L70 148 Q76 128 74 110 Z" fill="#4a545c"/>
 <path d="M40 104 L50 146 L64 104 Z" fill="#e6e0da"/>
 <!-- neck -->
 <path d="M30 80 L34 104 L50 118 L64 104 L64 80 Z" fill="#c8a690"/>
 <path d="M30 80 L34 104 L46 112 Q40 96 42 84 Z" fill="#a88a78"/>
 <!-- face -->
 <path d="M22 46 Q22 24 46 22 Q72 22 74 48 Q74 74 64 86 Q56 94 48 94 Q36 92 28 78 Q22 66 22 46 Z" fill="url(#skin)"/>
 <path d="M56 52 L52 70 Q52 74 58 73" stroke="#a88070" stroke-width="1.4" fill="none"/>
 <ellipse cx="40" cy="52" rx="4.5" ry="2" fill="#2e2420"/><ellipse cx="63" cy="53" rx="4" ry="2" fill="#2e2420"/>
 <path d="M33 47 Q40 43 47 47 M57 48 Q63 45 69 49" stroke="#4a3a30" stroke-width="1.6" fill="none"/>
 <path d="M44 78 Q52 76 60 78 Q52 82 44 78 Z" fill="#b07a6c"/>
 <!-- hair front -->
 <path d="M18 60 Q16 20 44 14 Q72 12 80 40 Q84 62 76 80 Q72 62 68 50 Q60 30 42 28 Q30 30 26 48 Q24 66 26 76 Q18 70 18 60 Z" fill="#6e5e52"/>
 <path d="M40 16 Q70 18 76 46 Q80 70 70 104 Q86 84 86 56 Q84 20 52 12 Z" fill="#7a6a5e"/>
 <path d="M46 18 Q66 24 70 48" stroke="#a4948a" stroke-width="2" fill="none" opacity=".6"/>
 <path d="M16 52 Q12 80 22 100" stroke="#4e4038" stroke-width="4" fill="none"/>
</svg>
</div>
<!-- bank circle -->
<div class="abs" style="left:39px;top:997px;width:43px;height:43px;border-radius:50%;background:radial-gradient(circle at 50% 45%,#6a6a6e,#48484c);border:2px solid #a4a4aa"></div>
<svg class="abs" style="left:39px;top:997px" width="43" height="43" viewBox="0 0 43 43">
 <path d="M10 15 L21.5 9 L33 15 Z" fill="#e8f0f4"/><rect x="10" y="15" width="23" height="2.5" fill="#dfe8ee"/>
 <g fill="#e0eaf0"><rect x="12" y="18" width="3" height="11"/><rect x="17.5" y="18" width="3" height="11"/><rect x="23" y="18" width="3" height="11"/><rect x="28" y="18" width="3" height="11"/></g>
 <g fill="#385868"><rect x="15" y="18.5" width="2.5" height="10"/><rect x="20.5" y="18.5" width="2.5" height="10"/><rect x="26" y="18.5" width="2" height="10"/></g>
 <rect x="9" y="29" width="25" height="3" fill="#f0f4f8"/>
</svg>
<!-- news bar -->
<div class="abs" style="left:8px;top:1041px;width:1040px;height:33px;border-radius:16px;background:radial-gradient(ellipse at 3% 50%,#2a2c2e 0%,#151718 40%,#0b0c0d 100%)"></div>
<div class="abs" style="left:24px;top:1044px;width:1011px;height:27px;border:1px solid #4e4e4a;border-radius:5px;background:#0e1112"></div>
<div class="t w" style="left:29.5px;top:1051px;font-size:17px;color:#e4e4e4">07.01.2010</div>
<div class="t w" style="left:133px;top:1049px;font-size:18px;color:#e4e4e4">Peru, Mali: Countries join together into a trading bloc.</div>
<!-- hexagon -->
<svg class="abs" style="left:1045px;top:1042px" width="36" height="31" viewBox="0 0 36 31">
 <path d="M9 0.5 L27 0.5 L35.5 15.5 L27 30.5 L9 30.5 L0.5 15.5 Z" fill="#cf8b33" stroke="#b87828" stroke-width="1"/>
</svg>
<div class="t" style="left:1058.5px;top:1050px;font-size:16px;font-weight:normal;color:#fff">3</div>

<div class="abs" style="left:1431px;top:1016px;width:500px;height:80px;background:#17191a;border:1.5px solid #4a4434;border-radius:6px"></div>
<div class="abs" style="left:1433px;top:1017px;width:500px;height:2px;background:linear-gradient(90deg,#6e6448,#5a5240)"></div>
<div class="abs" style="left:1437px;top:1008px;width:66px;height:67px;border-radius:50%;background:radial-gradient(circle at 45% 35%,#62b050 0%,#3d9a40 55%,#2c7c34 100%);border:3px solid #d8b070;box-shadow:0 0 3px #000"></div>
<svg class="abs" style="left:1437px;top:1008px" width="66" height="67" viewBox="0 0 66 67"><g fill="#e2b46c"><rect x="17" y="16" width="3" height="33"/><path d="M20 18 Q26 14 32 18 Q36 20 38 17 L38 32 Q34 34 30 31 Q25 28 20 32 Z"/><path d="M52 15 L56 19 L44 34 L40 31 Z"/><path d="M40 32 Q34 33 33 40 Q36 44 41 41 Q45 37 43 34 Z"/><path d="M33 44 Q30 50 31 53 Q34 56 37 53 Q37 49 33 44 Z"/></g></svg>
<div class="circ" style="left:1531px;top:997px"><svg width="38" height="38" viewBox="0 0 38 38" style="left:-2.5px;top:-2.5px"><g stroke="#e2b46c" stroke-width="2" fill="none"><circle cx="19" cy="19" r="11"/><ellipse cx="19" cy="19" rx="5" ry="11"/><path d="M8 19 H30 M10 13 H28 M10 25 H28 M19 8 V30"/></g><path d="M8 19 A11 11 0 0 0 19 30 L19 19 Z" fill="#e2b46c"/></svg></div>
<div class="circ" style="left:1571px;top:997px"><svg width="38" height="38" viewBox="0 0 38 38" style="left:-2.5px;top:-2.5px"><rect x="11" y="11" width="16" height="16" fill="none" stroke="#e2b46c" stroke-width="2"/><rect x="14" y="14" width="10" height="10" fill="#e2b46c"/><g stroke="#e2b46c" stroke-width="1.6"><path d="M14 7 V11 M17 7 V11 M21 7 V11 M24 7 V11 M14 27 V31 M17 27 V31 M21 27 V31 M24 27 V31 M7 14 H11 M7 17 H11 M7 21 H11 M7 24 H11 M27 14 H31 M27 17 H31 M27 21 H31 M27 24 H31"/></g></svg></div>
<div class="circ" style="left:1611px;top:997px"><svg width="38" height="38" viewBox="0 0 38 38" style="left:-2.5px;top:-2.5px"><g fill="#e2b46c" transform="rotate(45 19 19)"><rect x="13" y="5" width="12" height="12"/><circle cx="19" cy="4.5" r="2.6"/><circle cx="25.5" cy="11" r="2.6"/><circle cx="12.5" cy="11" r="2.6"/>
<rect x="13" y="19" width="12" height="12"/><circle cx="19" cy="18" r="2.6"/><circle cx="25.5" cy="25" r="2.6"/><circle cx="12.5" cy="25" r="2.6"/></g></svg></div>
<div class="circ" style="left:1651px;top:997px"><svg width="38" height="38" viewBox="0 0 38 38" style="left:-2.5px;top:-2.5px"><path d="M7 19 L12 14 L17 15 L21 13 L26 14 L31 19 L25 26 Q22 28 20 26 L13 24 Z" fill="#e2b46c"/><path d="M14 20 L18 18 L23 22 M17 23 L21 21" stroke="#6a4127" stroke-width="1.3" fill="none"/>
<path d="M9 12 A12 12 0 0 1 26 7" stroke="#e2b46c" stroke-width="2.2" fill="none"/><path d="M25 4 L29 8 L24 10 Z" fill="#e2b46c"/>
<path d="M29 26 A12 12 0 0 1 12 31" stroke="#e2b46c" stroke-width="2.2" fill="none"/><path d="M13 34 L9 30 L14 28 Z" fill="#e2b46c"/></svg></div>
<div class="circ" style="left:1691px;top:997px"><svg width="38" height="38" viewBox="0 0 38 38" style="left:-2.5px;top:-2.5px"><g fill="#e2b46c"><path d="M13 7 L15 10 L15 24 L11 24 L11 10 Z"/><path d="M25 7 L27 10 L27 24 L23 24 L23 10 Z"/><rect x="10" y="24" width="6" height="2"/><rect x="22" y="24" width="6" height="2"/><rect x="12" y="26" width="2" height="5"/><rect x="24" y="26" width="2" height="5"/></g></svg></div>
<div class="circ" style="left:1771px;top:997px"><svg width="38" height="38" viewBox="0 0 38 38" style="left:-2.5px;top:-2.5px"><g fill="#e2b46c"><path d="M19 8 L23 16 L20 30 L15 18 Z"/><path d="M10 16 L15 22 L16 30 L9 24 Z"/><path d="M28 16 L23 22 L22 30 L29 24 Z"/></g><path d="M19 8 L20 30" stroke="#6a4127" stroke-width="1"/></svg></div>
<div class="circ" style="left:1811px;top:997px"><svg width="38" height="38" viewBox="0 0 38 38" style="left:-2.5px;top:-2.5px"><g fill="#e2b46c"><rect x="18" y="8" width="2" height="23"/><path d="M20 10 Q25 8 29 11 L29 19 Q25 16 20 19 Z"/><path d="M18 14 Q13 12 9 15 L9 23 Q13 20 18 23 Z"/></g></svg></div>
<div class="circ" style="left:1851px;top:997px"><svg width="38" height="38" viewBox="0 0 38 38" style="left:-2.5px;top:-2.5px"><g fill="#e2b46c"><rect x="15" y="7" width="2" height="20"/><path d="M17 9 Q22 7 27 10 L27 18 Q22 15 17 18 Z"/><path d="M8 28 Q10 23 15 25 Q19 21 24 25 Q30 24 30 29 Z"/></g></svg></div>
<div class="circ" style="left:1508px;top:1038px"><svg width="38" height="38" viewBox="0 0 38 38" style="left:-2.5px;top:-2.5px"><path d="M8 26 L12 18 L17 21 L22 18 L30 22 L28 29 L21 26 L16 29 Z" fill="none" stroke="#e2b46c" stroke-width="2"/><path d="M25 7 Q30 7 30 12 Q30 15 25 20 Q20 15 20 12 Q20 7 25 7 Z" fill="#e2b46c"/><circle cx="25" cy="12" r="1.8" fill="#6a4127"/></svg></div>
<div class="circ" style="left:1548px;top:1038px"><svg width="38" height="38" viewBox="0 0 38 38" style="left:-2.5px;top:-2.5px"><path d="M19 6 L21 11 L26 11 L22 14 L23.5 19 L19 16 L14.5 19 L16 14 L12 11 L17 11 Z" fill="#e2b46c"/><path d="M9 19 L19 25 L29 19 L29 23 L19 29 L9 23 Z M9 26 L19 32 L29 26 L29 29 L19 34 L9 29 Z" fill="#e2b46c"/></svg></div>
<div class="circ" style="left:1588px;top:1038px"><svg width="38" height="38" viewBox="0 0 38 38" style="left:-2.5px;top:-2.5px"><path d="M14 11 A6 6 0 1 0 24 11" stroke="#e2b46c" stroke-width="2.2" fill="none"/><rect x="18" y="6" width="2.2" height="9" fill="#e2b46c"/><path d="M8 27 Q19 18 30 27 Q19 35 8 27 Z" fill="#e2b46c"/><circle cx="19" cy="27" r="3" fill="#6a4127"/></svg></div>
<div class="circ" style="left:1628px;top:1038px"><svg width="38" height="38" viewBox="0 0 38 38" style="left:-2.5px;top:-2.5px"><g fill="#e2b46c"><rect x="9" y="23" width="5" height="8"/><rect x="16" y="18" width="5" height="13"/><rect x="23" y="12" width="5" height="19"/></g><path d="M8 20 L14 13 L18 16 L24 9" stroke="#e2b46c" stroke-width="2" fill="none"/></svg></div>
<div class="circ" style="left:1668px;top:1038px"><svg width="38" height="38" viewBox="0 0 38 38" style="left:-2.5px;top:-2.5px"><g fill="#e2b46c"><circle cx="12" cy="11" r="2.5"/><circle cx="19" cy="10" r="2.5"/><circle cx="26" cy="11" r="2.5"/><rect x="9.5" y="14" width="5" height="15" rx="2"/><rect x="16.5" y="13" width="5" height="17" rx="2"/><rect x="23.5" y="14" width="5" height="15" rx="2"/></g></svg></div>
<div class="circ" style="left:1708px;top:1038px"><svg width="38" height="38" viewBox="0 0 38 38" style="left:-2.5px;top:-2.5px"><g fill="#e2b46c"><path d="M9 17 Q19 9 29 17 Z"/><rect x="8" y="17" width="22" height="2"/><rect x="10" y="20" width="2.5" height="8"/><rect x="15" y="20" width="2.5" height="8"/><rect x="20.5" y="20" width="2.5" height="8"/><rect x="25.5" y="20" width="2.5" height="8"/><rect x="7" y="28" width="24" height="3"/><rect x="18.5" y="6" width="1.5" height="6"/><path d="M20 6 L24 7.5 L20 9 Z"/></g></svg></div>
<div class="circ" style="left:1748px;top:1038px"><svg width="38" height="38" viewBox="0 0 38 38" style="left:-2.5px;top:-2.5px"><g fill="#e2b46c"><circle cx="13" cy="13" r="4.5"/><circle cx="25" cy="25" r="4.5"/></g><path d="M21 10 Q27 10 27 17 M17 28 Q11 28 11 21" stroke="#e2b46c" stroke-width="2.2" fill="none"/></svg></div>
<div class="circ" style="left:1788px;top:1038px"><svg width="38" height="38" viewBox="0 0 38 38" style="left:-2.5px;top:-2.5px"><path d="M19 30 L8 19 Q4 13 9 9 Q14 6 19 12 Q24 6 29 9 Q34 13 30 19 Z" fill="#e2b46c"/><path d="M11 20 L17 15 L23 19 L28 16" stroke="#6a4127" stroke-width="1.6" fill="none"/></svg></div>
<div class="circ" style="left:1828px;top:1038px;background:#505458;border-color:#9a9ea4"><svg width="38" height="38" viewBox="0 0 38 38" style="left:-2.5px;top:-2.5px"><circle cx="15" cy="15" r="4" fill="#a8acb0"/><g stroke="#a8acb0" stroke-width="1.5"><path d="M15 7 V9 M8 15 H10 M10 10 L11.5 11.5 M20 10 L18.5 11.5"/></g><path d="M11 27 Q11 22 16 22 Q18 17 24 18 Q29 19 29 23 Q32 24 31 27 Z" fill="#a8acb0"/></svg></div>
<svg class="abs" style="left:1870px;top:1020px" width="50" height="60" viewBox="0 0 50 60"><g stroke="#4e4530" stroke-width="2.5" fill="none"><circle cx="34" cy="30" r="22"/><ellipse cx="34" cy="30" rx="10" ry="22"/><path d="M12 30 H56 M15 19 H53 M15 41 H53"/></g><path d="M6 38 Q22 24 38 38 Q22 52 6 38 Z" fill="#4a4232"/><circle cx="22" cy="38" r="5" fill="#17191a"/></svg>

</body></html>
